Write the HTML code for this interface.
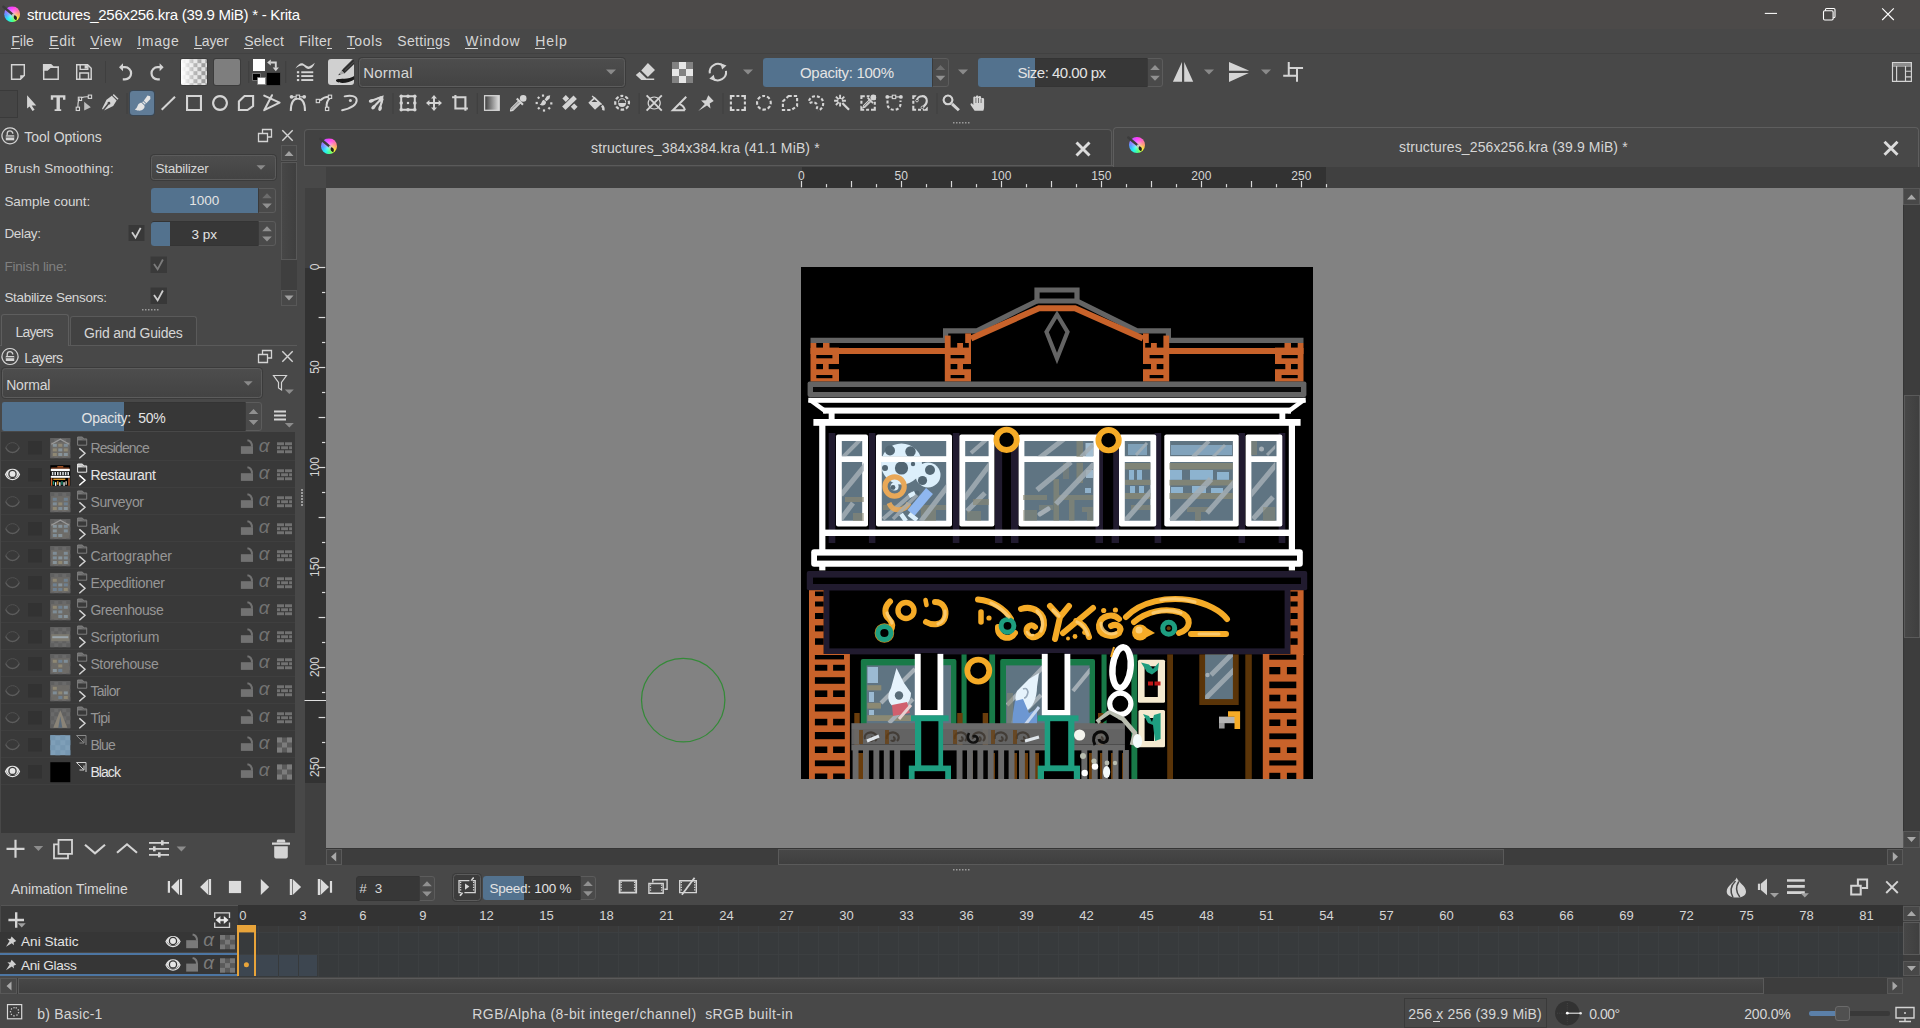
<!DOCTYPE html>
<html><head><meta charset="utf-8"><title>Krita</title>
<style>
html,body{margin:0;padding:0;}
body{width:1920px;height:1028px;overflow:hidden;background:#484848;position:relative;font-family:"Liberation Sans",sans-serif;color:#d6d6d6;}
.a{position:absolute;box-sizing:border-box;display:block;}
.t{position:absolute;white-space:pre;font-family:"Liberation Sans",sans-serif;}
svg{overflow:visible}
.btn{border:1px solid #5c5c5c;border-radius:3.5px;background:linear-gradient(#4d4d4d,#434343);box-shadow:0 0 0 1px #3b3b3b;}
.field{border:1px solid #343434;border-radius:3px;background:#373737;}
</style></head><body>

<div class="a " style="left:0px;top:0px;width:1920px;height:28.6px;background:#4c4a49;"></div>
<span class="t" style="left:27.0px;top:7.0px;font-size:15px;line-height:15px;letter-spacing:-0.268px;color:#ffffff;">structures_256x256.kra (39.9 MiB) * - Krita</span>
<div class="a " style="left:0px;top:53px;width:1920px;height:1px;background:#414141;"></div>
<span class="t" style="left:11.3px;top:34.4px;font-size:14px;line-height:14px;letter-spacing:-0.019px;color:#d6d6d6;">File</span>
<div class="a " style="left:11.3px;top:48px;width:8.6px;height:1px;background:#d6d6d6;"></div>
<span class="t" style="left:49.3px;top:34.4px;font-size:14px;line-height:14px;letter-spacing:0.525px;color:#d6d6d6;">Edit</span>
<div class="a " style="left:49.3px;top:48px;width:9.3px;height:1px;background:#d6d6d6;"></div>
<span class="t" style="left:90.2px;top:34.4px;font-size:14px;line-height:14px;letter-spacing:0.503px;color:#d6d6d6;">View</span>
<div class="a " style="left:90.2px;top:48px;width:9.3px;height:1px;background:#d6d6d6;"></div>
<span class="t" style="left:137.3px;top:34.4px;font-size:14px;line-height:14px;letter-spacing:0.648px;color:#d6d6d6;">Image</span>
<div class="a " style="left:137.3px;top:48px;width:3.9px;height:1px;background:#d6d6d6;"></div>
<span class="t" style="left:194.2px;top:34.4px;font-size:14px;line-height:14px;letter-spacing:-0.129px;color:#d6d6d6;">Layer</span>
<div class="a " style="left:194.2px;top:48px;width:7.8px;height:1px;background:#d6d6d6;"></div>
<span class="t" style="left:244.2px;top:34.4px;font-size:14px;line-height:14px;letter-spacing:0.138px;color:#d6d6d6;">Select</span>
<div class="a " style="left:244.2px;top:48px;width:9.3px;height:1px;background:#d6d6d6;"></div>
<span class="t" style="left:299.0px;top:34.4px;font-size:14px;line-height:14px;letter-spacing:0.318px;color:#d6d6d6;">Filter</span>
<div class="a " style="left:327.0px;top:48px;width:4.7px;height:1px;background:#d6d6d6;"></div>
<span class="t" style="left:346.7px;top:34.4px;font-size:14px;line-height:14px;letter-spacing:0.655px;color:#d6d6d6;">Tools</span>
<div class="a " style="left:346.7px;top:48px;width:8.6px;height:1px;background:#d6d6d6;"></div>
<span class="t" style="left:397.3px;top:34.4px;font-size:14px;line-height:14px;letter-spacing:0.302px;color:#d6d6d6;">Settings</span>
<div class="a " style="left:426.8px;top:48px;width:7.8px;height:1px;background:#d6d6d6;"></div>
<span class="t" style="left:465.3px;top:34.4px;font-size:14px;line-height:14px;letter-spacing:0.922px;color:#d6d6d6;">Window</span>
<div class="a " style="left:465.3px;top:48px;width:13.2px;height:1px;background:#d6d6d6;"></div>
<span class="t" style="left:535.3px;top:34.4px;font-size:14px;line-height:14px;letter-spacing:0.869px;color:#d6d6d6;">Help</span>
<div class="a " style="left:535.3px;top:48px;width:10.1px;height:1px;background:#d6d6d6;"></div>
<div class="a btn" style="left:359px;top:58px;width:266px;height:29px;"></div>
<span class="t" style="left:363.3px;top:64.6px;font-size:15px;line-height:15px;letter-spacing:0.172px;color:#d6d6d6;">Normal</span>
<div class="a field" style="left:763px;top:58px;width:186px;height:29px;"></div>
<div class="a " style="left:763px;top:58px;width:169px;height:29px;background:#53728e;border-radius:3px 0 0 3px;"></div>
<div class="a " style="left:932px;top:58px;width:17px;height:29px;background:#4a4a4a;border:1px solid #5c5c5c;border-left:1px solid #3a3a3a;border-radius:0 3px 3px 0;"></div>
<span class="t" style="left:800.0px;top:64.5px;font-size:15px;line-height:15px;letter-spacing:-0.296px;color:#e4e4e4;">Opacity: 100%</span>
<div class="a field" style="left:978px;top:58px;width:185px;height:29px;"></div>
<div class="a " style="left:978px;top:58px;width:57px;height:29px;background:#53728e;border-radius:3px 0 0 3px;"></div>
<div class="a " style="left:1147px;top:58px;width:16px;height:29px;background:#4a4a4a;border:1px solid #5c5c5c;border-left:1px solid #3a3a3a;border-radius:0 3px 3px 0;"></div>
<span class="t" style="left:1017.5px;top:64.5px;font-size:15px;line-height:15px;letter-spacing:-0.504px;color:#e4e4e4;">Size: 40.00 px</span>
<div class="a " style="left:0px;top:90px;width:18px;height:28px;background:#454545;border:1px solid #3a3a3a;border-left:none;"></div>
<div class="a " style="left:130px;top:91px;width:24.3px;height:24.3px;background:#607c97;border-radius:3px;box-shadow:0 0 0 1px #3a4754;"></div>
<div class="a" style="left:181px;top:58.8px;width:26.2px;height:26.2px;border-radius:2px;overflow:hidden;background:#e2e2e2;box-shadow:0 0 0 1px #3c3c3c;"><div class="a" style="left:0;top:0;width:27px;height:27px;background:conic-gradient(#e0e0e0 25%,#9a9a9a 0 50%,#e0e0e0 0 75%,#9a9a9a 0) 0.4px 0.2px/8px 8px;"></div><div class="a" style="left:0;top:0;width:27px;height:27px;background:linear-gradient(90deg,#fff 0%,rgba(255,255,255,0.78) 18%,rgba(255,255,255,0.32) 48%,rgba(255,255,255,0.05) 80%,rgba(255,255,255,0) 100%);"></div></div>
<div class="a " style="left:214px;top:58.8px;width:26.2px;height:26.2px;background:#7e7e7e;border-radius:2px;box-shadow:0 0 0 1px #3c3c3c;"></div>
<div class="a " style="left:252.5px;top:58.8px;width:12.5px;height:12px;background:#ffffff;"></div>
<div class="a " style="left:266.8px;top:72.9px;width:12.8px;height:12.2px;background:#000000;box-shadow:0 0 0 0.6px #3a3a3a;"></div>
<div class="a " style="left:253.3px;top:73.7px;width:7.2px;height:6.4px;background:#000;box-shadow:0 0 0 0.8px #7a7a7a;"></div>
<div class="a " style="left:257.8px;top:77.8px;width:6.8px;height:6.4px;background:#fff;box-shadow:0 0 0 0.8px #9a9a9a;"></div>
<div class="a " style="left:328px;top:58.8px;width:26.2px;height:26.2px;background:#d0d0d0;border-radius:3px;"></div>
<div class="a" style="left:672px;top:62px;width:21px;height:21px;background:#e6e6e6;"><div class="a" style="left:0px;top:0px;width:7px;height:7px;background:#828282;"></div><div class="a" style="left:14px;top:0px;width:7px;height:7px;background:#828282;"></div><div class="a" style="left:7px;top:7px;width:7px;height:7px;background:#828282;"></div><div class="a" style="left:0px;top:14px;width:7px;height:7px;background:#828282;"></div><div class="a" style="left:14px;top:14px;width:7px;height:7px;background:#828282;"></div></div>
<svg class="a" style="left:0;top:0" width="1920" height="130" viewBox="0 0 1920 130"><path d="M11.6,64.7 H24.3 V75.4 L20.4,79.3 H11.6 Z" fill="none" stroke="#d4d4d4" stroke-width="1.44" /><path d="M20.2,75.2 H24.6 L20.2,79.6 Z" fill="#d4d4d4"/><path d="M42.9,63.9 H51.1 L53.6,66.2 H59 V68 H50.6 L47.6,70.8 H42.9 Z" fill="#d4d4d4"/><path d="M43.7,68 V79.3 H58.2 V67.6" fill="none" stroke="#d4d4d4" stroke-width="1.44" /><path d="M76.7,64.7 H87.6 L91.2,68.3 V79.3 H76.7 Z" fill="none" stroke="#d4d4d4" stroke-width="1.44" /><path d="M80.2,64.7 V69.4 H87.8 V65 M79.8,79.3 V73 H88.5 V79.3" fill="none" stroke="#d4d4d4" stroke-width="1.4" /><rect x="84.6" y="65.2" width="2.6" height="3.4" fill="#d4d4d4"/><path d="M122.4,67.2 H125 A6.1,6.1 0 0 1 125,79.4 H122.8" fill="none" stroke="#d4d4d4" stroke-width="2.2" /><path d="M119,67.2 L123,63.2 V71.2 Z" fill="#d4d4d4"/><path d="M160.2,67.2 H157.6 A6.1,6.1 0 0 0 157.6,79.4 H159.8" fill="none" stroke="#d4d4d4" stroke-width="2.2" /><path d="M163.6,67.2 L159.6,63.2 V71.2 Z" fill="#d4d4d4"/><rect x="105" y="61" width="1" height="22" fill="#3f3f3f"/><rect x="248.2" y="61" width="1" height="22" fill="#3f3f3f"/><rect x="285.2" y="61" width="1" height="22" fill="#3f3f3f"/><g transform="translate(272,65)" ><path d="M-1.4,-2.5 H3.8 V2.7" fill="none" stroke="#d4d4d4" stroke-width="1.9" /><path d="M-4.9,-2.5 L-1.2,-5.4 V0.4 Z M3.8,6.25 L0.7,2.5 H6.9 Z" fill="#d4d4d4"/></g><path d="M295.4,68.6 C298,64.6 300.6,62.6 303,63.6 C305.4,64.8 306.6,66.8 309,66.4 C311,66 312.6,64.4 314.8,62.8 C313.6,66.4 311,69.4 308,69 C305.4,68.4 304.6,66 302.4,65.6 C300.4,65.4 298,66.6 295.4,68.6 Z" fill="#d4d4d4"/><rect x="296.9" y="71.2" width="2.3" height="2.1" fill="#d4d4d4"/><rect x="301.25" y="71.3" width="12" height="1.9" fill="#d4d4d4"/><rect x="296.9" y="75" width="2.3" height="2.1" fill="#d4d4d4"/><rect x="301.25" y="75.1" width="12" height="1.9" fill="#d4d4d4"/><rect x="296.9" y="79" width="2.3" height="2.1" fill="#d4d4d4"/><rect x="301.25" y="79.1" width="12" height="1.9" fill="#d4d4d4"/><clipPath id="pc"><rect x="328" y="58.8" width="26.2" height="26.2" rx="3"/></clipPath><g clip-path="url(#pc)"><path d="M336.6,79.6 C340,78 348,80.4 355,75.6 L355,79 C349,83.6 340,83.4 337.2,82 C335.6,81 335.6,80.2 336.6,79.6 Z" fill="#1a1a1a"/><path d="M341.6,70.4 L354.6,57.6 L357.4,60.8 L344.4,73.6 Z" fill="#2c2c2c"/><path d="M343,69 L355.4,57" stroke="#6a6a6a" stroke-width="0.7"/><path d="M344.6,70.8 L357,58.8" stroke="#6a6a6a" stroke-width="0.7"/><path d="M338.2,75.2 L341.6,70.4 L344.4,73.6 Z" fill="#a4a4a4"/><path d="M338.2,75.2 L339.5,73.4 L340.6,74.6 Z" fill="#333"/></g><path d="M606.0,69.5 h10 l-5.0,5 z" fill="#8a8a8a"/><g transform="translate(647,72)" ><path d="M0.9,-9.1 L8,-2 L0.9,5.1 L-5.75,-1.6 Z M-7.4,-0.3 L-0.5,6.6 H7.2 V8 H-5.75 L-11.2,3 Z" fill="#d4d4d4"/></g><g transform="translate(717.9,72.1)" ><path d="M-8.1,1.2 A8.2,8.2 0 0 1 5,-6.5 M8.1,-1.2 A8.2,8.2 0 0 1 -5,6.5" fill="none" stroke="#d4d4d4" stroke-width="2" /><path d="M2.6,-8.8 L8.6,-6.6 L4.2,-2.6 Z M-2.6,8.8 L-8.6,6.6 L-4.2,2.6 Z" fill="#d4d4d4"/></g><path d="M743.0,69.5 h10 l-5.0,5 z" fill="#8a8a8a"/><path d="M935.7,70.07 h9.6 l-4.8,-5 z" fill="#6c6c6c"/><path d="M935.7,75.74 h9.6 l-4.8,5 z" fill="#909090"/><path d="M958.0,69.5 h10 l-5.0,5 z" fill="#8a8a8a"/><path d="M1150.2,70.07 h9.6 l-4.8,-5 z" fill="#909090"/><path d="M1150.2,75.74 h9.6 l-4.8,5 z" fill="#909090"/><g transform="translate(1183,72)" ><path d="M-1,-10 v19.8 h-9.1 z M1.2,-10 v19.8 h9 z" fill="#d4d4d4"/></g><path d="M1204.0,69.5 h10 l-5.0,5 z" fill="#8a8a8a"/><g transform="translate(1238.9,72)" ><path d="M-9.9,-1.2 v-8.8 l19.8,8.4 v0.4 z M-9.9,0.9 h19.8 l-19.8,9.1 z" fill="#d4d4d4"/></g><path d="M1261.0,69.5 h10 l-5.0,5 z" fill="#8a8a8a"/><g transform="translate(1294,72)" ><path d="M-5.25,-10 v13.8 M-5.25,-3.9 h14.3 M-10.8,3.8 h14.3 M3,-3.9 v13.7" fill="none" stroke="#d4d4d4" stroke-width="2" /></g><g transform="translate(1902,72)" ><path d="M-9.5,-9.5 H9.4 V9.4 H-9.5 Z M-9.5,-8 H9.4 M-9.5,-6 H9.4 M-5.4,-6 V9.4 M3.5,-6 V9.4 M3.5,-0.75 H9.4 M3.5,4.9 H9.4" fill="none" stroke="#d4d4d4" stroke-width="1.15" /></g><path d="M1764.8,13.4 h12.2" fill="none" stroke="#ffffff" stroke-width="1.05" /><rect x="1825.4" y="8.5" width="9.6" height="9.2" rx="1.2" fill="none" stroke="#fff" stroke-width="1.1"/><rect x="1823.5" y="10.8" width="9.6" height="9.2" rx="1.2" fill="#4b4948" stroke="#fff" stroke-width="1.1"/><path d="M1882.2,8.4 l11.6,11.6 M1893.8,8.4 l-11.6,11.6" fill="none" stroke="#ffffff" stroke-width="1.1" /><g transform="translate(12.1,14.2)"><foreignObject x="-8.1" y="-8.1" width="16.2" height="16.2"><div style="width:16.2px;height:16.2px;border-radius:50%;background:radial-gradient(circle at 50% 50%,rgba(255,255,255,0.55) 0%,rgba(255,255,255,0) 55%),conic-gradient(from 0deg,#ff38ff,#ff60d0 40deg,#ffa070 90deg,#f4ff30 135deg,#50ff80 170deg,#20f4f0 215deg,#50a0ff 260deg,#a070ff 300deg,#ff38ff 360deg);"></div></foreignObject><path d="M-8.748,-7.452 L0.405,0.162" stroke="#3c3c3c" stroke-width="2.4299999999999997" stroke-linecap="round"/><path d="M0.162,0.0 L2.4299999999999997,1.944" stroke="#c4c4c4" stroke-width="2.592"/><path d="M2.2680000000000002,1.1340000000000001 c2.592,0.486 3.4019999999999997,2.916 1.944,4.859999999999999 c-1.782,-0.324 -3.564,-2.2680000000000002 -1.944,-4.859999999999999 z" fill="#202020"/></g><rect x="126.5" y="93" width="1" height="21" fill="#3f3f3f"/><rect x="392.5" y="93" width="1" height="21" fill="#3f3f3f"/><rect x="476.8" y="93" width="1" height="21" fill="#3f3f3f"/><rect x="638.6" y="93" width="1" height="21" fill="#3f3f3f"/><rect x="722.5" y="93" width="1" height="21" fill="#3f3f3f"/><rect x="936.5" y="93" width="1" height="21" fill="#3f3f3f"/><g transform="translate(31,103)" ><path d="M-3.9,-7.8 V5.5 L-1.4,3.4 L1.5,8 L3.6,6.75 L0.7,2.6 H5.25 Z" fill="#d4d4d4"/></g><g transform="translate(58,103)" ><path d="M-7.2,-7.8 H7.4 V-3.25 H5 V-5.6 H1.9 V6.3 H3.2 V8 H-3.4 V6.3 H-1.5 V-5.6 H-4.8 V-3.25 H-7.2 Z" fill="#d4d4d4"/></g><g transform="translate(83.5,103)" ><path d="M-5.6,4 C-5.6,-1 -5,-4 -3.5,-4.1 M-1.8,-5.4 C0.5,-6.3 2.5,-6.3 4.6,-6.2" fill="none" stroke="#d4d4d4" stroke-width="1.2" /><rect x="-5.2" y="-5.8" width="3.3" height="3.3" fill="none" stroke="#d4d4d4" stroke-width="1.1"/><rect x="4.8" y="-7.9" width="3.3" height="3.3" fill="none" stroke="#d4d4d4" stroke-width="1.1"/><rect x="-7.3" y="4.2" width="3.3" height="3.3" fill="none" stroke="#d4d4d4" stroke-width="1.1"/><path d="M0.7,-1.2 V7.6 L7.3,4.25 Z" fill="#bdbdbd"/></g><g transform="translate(110,103)" ><path d="M-8,5.8 L-3.5,-3.2 L1.8,-7.2 L6.6,-2.6 L3.2,3 L-6,7.6 L-1.2,1.6 a1.4,1.4 0 1 0 -1.2,-1 L-7.2,6.6 Z" fill="#d4d4d4"/><path d="M3.2,-8.4 L8,-3.8" stroke="#d4d4d4" stroke-width="1.5"/></g><g transform="translate(142,103)" ><path d="M5.5,-7.6 L8.2,-6.8 L8.4,-4 L4.4,0.2 L1.8,-2.3 Z" fill="#e4e4e4"/><path d="M1.2,-1.7 L3.8,0.8 L2.9,1.8 L0.2,-0.8 Z" fill="#e4e4e4"/><path d="M-0.4,-0.2 L2.4,2.5 C3.4,5.5 0,8 -3.5,7.6 C-5.2,7.4 -6.6,6.8 -7.2,6.2 C-4.8,5.6 -5,3.6 -3.8,1.6 C-3,0.4 -1.6,-0.2 -0.4,-0.2 Z" fill="#e4e4e4"/></g><g transform="translate(168.3,103)" ><path d="M-6.6,6.7 L6.7,-6.2" fill="none" stroke="#d4d4d4" stroke-width="2" /></g><g transform="translate(194,103)" ><path d="M-6.95,-6.95 h13.9 v13.9 h-13.9 z" fill="none" stroke="#d4d4d4" stroke-width="2.1" /></g><g transform="translate(220,103)" ><path d="M0,-6.85 a6.85,6.85 0 1 0 0.01,0 z" fill="none" stroke="#d4d4d4" stroke-width="2.1" /></g><g transform="translate(246,103)" ><path d="M-1.5,-7 H7.1 V3 L1.5,7 H-7.1 V-1.5 Z" fill="none" stroke="#d4d4d4" stroke-width="2.1" /></g><g transform="translate(271.7,103)" ><path d="M-7.5,-7.4 L7.9,-0.3 L-7.5,7.2 L0.3,-7.8" fill="none" stroke="#d4d4d4" stroke-width="2" stroke-linejoin="round" stroke-linecap="round"/></g><g transform="translate(297.9,103)" ><path d="M-7.1,8 C-7.1,-2 -3.5,-4.6 0,-4.6 C3.5,-4.6 7.1,-2 7.1,8" fill="none" stroke="#d4d4d4" stroke-width="2" /><path d="M-6.2,-6.2 H6.3" fill="none" stroke="#d4d4d4" stroke-width="1.2" /><circle cx="-6.3" cy="-6.2" r="1.9" fill="#d4d4d4"/><circle cx="6.3" cy="-6.2" r="1.9" fill="#d4d4d4"/><rect x="-1.7" y="-7.9" width="3.4" height="3.4" fill="#484848" stroke="#d4d4d4" stroke-width="1.1"/></g><g transform="translate(324.5,103)" ><path d="M-4.5,-2.6 C-1.2,-5.5 2.2,-6.3 4.2,-6.3" fill="none" stroke="#d4d4d4" stroke-width="2" /><path d="M5.5,-5 C2.2,-2.2 1.8,1.2 2.3,4.5" fill="none" stroke="#d4d4d4" stroke-width="2" /><rect x="-8.25" y="-3.65" width="3.3" height="3.3" fill="#484848" stroke="#d4d4d4" stroke-width="1.1"/><rect x="3.85" y="-7.85" width="3.3" height="3.3" fill="#484848" stroke="#d4d4d4" stroke-width="1.1"/><rect x="0.9500000000000002" y="4.25" width="3.3" height="3.3" fill="#484848" stroke="#d4d4d4" stroke-width="1.1"/></g><g transform="translate(350,103)" ><path d="M-5.4,-6.6 C1,-8 6.5,-7 6.7,-3 C6.8,2 0,5.5 -7.9,7.2" fill="none" stroke="#d4d4d4" stroke-width="1.9" stroke-linecap="round"/><circle cx="0.4" cy="-2.4" r="1.5" fill="#d4d4d4"/></g><g transform="translate(376.7,103)" ><path d="M7,-7.8 L0.5,-5.2 L5.6,0.5 Z" fill="#d4d4d4"/><path d="M5,-6 L-4.5,-2.5 M5.5,-5 L-2.6,3.4 M6,-4.5 L3.5,4" fill="none" stroke="#d4d4d4" stroke-width="2.16" /><ellipse cx="-5.4" cy="-2.1" rx="2.6" ry="1.7" fill="#d4d4d4" transform="rotate(-20 -5.4 -2.1)"/><ellipse cx="-3.2" cy="4.2" rx="2.6" ry="1.7" fill="#d4d4d4" transform="rotate(-45 -3.2 4.2)"/><ellipse cx="3.4" cy="5.4" rx="1.8" ry="2.6" fill="#d4d4d4" transform="rotate(15 3.4 5.4)"/></g><g transform="translate(408,103)" ><path d="M-6.8,-6.8 h13.6 v13.6 h-13.6 z" fill="none" stroke="#d4d4d4" stroke-width="2" /><circle cx="-6.8" cy="-6.8" r="1.75" fill="#d4d4d4"/><circle cx="-6.8" cy="0" r="1.75" fill="#d4d4d4"/><circle cx="-6.8" cy="6.8" r="1.75" fill="#d4d4d4"/><circle cx="0" cy="-6.8" r="1.75" fill="#d4d4d4"/><circle cx="0" cy="6.8" r="1.75" fill="#d4d4d4"/><circle cx="6.8" cy="-6.8" r="1.75" fill="#d4d4d4"/><circle cx="6.8" cy="0" r="1.75" fill="#d4d4d4"/><circle cx="6.8" cy="6.8" r="1.75" fill="#d4d4d4"/><rect x="-1.1" y="-1.1" width="2.2" height="2.2" fill="#d4d4d4"/></g><g transform="translate(434,103)" ><path d="M-6,0 h12 M0,-6 v12" fill="none" stroke="#d4d4d4" stroke-width="2" /><path d="M-8,0 l3.4,-3 v6 z M8,0 l-3.4,-3 v6 z M0,-8 l-3,3.4 h6 z M0,8 l-3,-3.4 h6 z" fill="#d4d4d4"/></g><g transform="translate(460,103)" ><path d="M-4.6,-8 V5.5 H7.9 M-7.9,-5.75 H5.4 V7.8" fill="none" stroke="#d4d4d4" stroke-width="2.1" /></g><defs><linearGradient id="tg" x1="0" x2="1"><stop offset="0" stop-color="#3a3a3a"/><stop offset="1" stop-color="#e0e0e0"/></linearGradient></defs><g transform="translate(491.9,103)" ><rect x="-7.3" y="-7.3" width="14.6" height="14.6" fill="url(#tg)" stroke="#d4d4d4" stroke-width="1.3"/></g><g transform="translate(518.3,103)" ><circle cx="4.9" cy="-4.6" r="3.3" fill="#d4d4d4"/><path d="M-0.8,-5.2 L5.4,1 L3.9,2.5 L-2.3,-3.7 Z" fill="#d4d4d4"/><path d="M0.6,-2.4 L-7.2,5.4 L-7.8,7.9 L-5.3,7.3 L2.5,-0.5" fill="none" stroke="#d4d4d4" stroke-width="1.2" stroke-linejoin="round"/><path d="M1,-0.6 L-6.6,7" fill="none" stroke="#d4d4d4" stroke-width="1.1" /></g><g transform="translate(544,103)" ><path d="M6.2,-7.8 L3,-7 L0.6,-3.4 L2.4,-1.8 L5.6,-4.6 Z" fill="#d4d4d4"/><path d="M0,-3 L2,-1.2 C2.4,1.4 0.2,2.6 -2,2.4 C-3.2,2.3 -4,1.9 -4.4,1.5 C-2.6,1.1 -2.8,-0.4 -2,-1.6 C-1.4,-2.5 -0.8,-3 0,-3 Z" fill="#d4d4d4"/><rect x="-8.4" y="-1.1" width="2.2" height="2.2" fill="#d4d4d4" transform="rotate(0 -7.3 0)"/><rect x="-6.5" y="-6.300000000000001" width="2.2" height="2.2" fill="#d4d4d4" transform="rotate(45 -5.4 -5.2)"/><rect x="-2.1" y="-8.5" width="2.2" height="2.2" fill="#d4d4d4" transform="rotate(0 -1 -7.4)"/><rect x="6.199999999999999" y="-0.7000000000000001" width="2.2" height="2.2" fill="#d4d4d4" transform="rotate(0 7.3 0.4)"/><rect x="4.1" y="4.1" width="2.2" height="2.2" fill="#d4d4d4" transform="rotate(45 5.2 5.2)"/><rect x="-1.1" y="6.4" width="2.2" height="2.2" fill="#d4d4d4" transform="rotate(0 0 7.5)"/><rect x="-6.300000000000001" y="4.1" width="2.2" height="2.2" fill="#d4d4d4" transform="rotate(45 -5.2 5.2)"/></g><g transform="translate(570,103)" ><path d="M-6.2,5.2 L5.2,-5.8" stroke="#d4d4d4" stroke-width="4.8"/><path d="M-4.2,-7.9 l3.4,3.4 l-3.4,3.4 l-3.4,-3.4 z M4.2,0.4 l3.4,3.4 l-3.4,3.4 l-3.4,-3.4 z" fill="#d4d4d4"/></g><g transform="translate(595.7,103)" ><path d="M-7.4,-0.3 L-1.1,-6.2 L5.55,0.9 L-0.7,6.75 Z" fill="#d4d4d4"/><path d="M-4.2,-0.9 L-1.2,-3.8 L1.8,-0.9 Z" fill="#484848"/><path d="M-3.6,-7 L6,1.6" fill="none" stroke="#d4d4d4" stroke-width="1.3" /><path d="M6.2,2.6 C7.8,4.2 8,5.8 7.6,7.4" fill="none" stroke="#d4d4d4" stroke-width="2.4" /></g><g transform="translate(622.1,102.8)" ><path d="M0,-6.9 a6.9,6.9 0 1 0 0.01,0 z" fill="none" stroke="#d4d4d4" stroke-width="2.2" stroke-dasharray="3.4 2.02" stroke-dashoffset="1.7"/><path d="M-3.9,0.2 a3.9,3.9 0 0 0 7.8,0 z" fill="#d4d4d4"/><path d="M-3.6,-0.4 a3.6,3.6 0 0 1 7.2,0" fill="none" stroke="#d4d4d4" stroke-width="1.1"/></g><g transform="translate(654.2,103)" ><path d="M-7.6,-7.6 L7.6,7.6 M7.6,-7.6 L-7.6,7.6" fill="none" stroke="#d4d4d4" stroke-width="1.9" /><path d="M0,-6 a6,6 0 1 0 0.01,0 z" fill="none" stroke="#d4d4d4" stroke-width="1.2" /></g><g transform="translate(679.5,103)" ><path d="M5.4,7.2 H-6.6 L6.75,-6.2" fill="none" stroke="#d4d4d4" stroke-width="2" stroke-linejoin="miter"/><path d="M-0.3,0.9 Q4.6,2.8 5.4,7.2" fill="none" stroke="#d4d4d4" stroke-width="2" /></g><g transform="translate(705.7,103)" ><path d="M2.6,-7.8 L8,-2 L4,0.4 L4.8,5.6 L1.3,2.4 L-7.4,7.9 L-0.9,1 L-4.6,-2.6 L0.4,-2.8 Z" fill="#d4d4d4"/></g><g transform="translate(737.9,103)" ><path d="M-7,-7 h14 v14 h-14 z" fill="none" stroke="#d4d4d4" stroke-width="2.1" stroke-dasharray="7.2 1.9 3 1.9" stroke-dashoffset="3.6"/></g><g transform="translate(763.9,102.8)" ><path d="M0,-6.85 a6.85,6.85 0 1 0 0.01,0 z" fill="none" stroke="#d4d4d4" stroke-width="2.1" stroke-dasharray="3.4 1.98" stroke-dashoffset="1.7"/></g><g transform="translate(790,103)" ><path d="M-1.5,-7 H7.1 V3 L1.5,7 H-7.1 V-1.5 Z" fill="none" stroke="#d4d4d4" stroke-width="2.1" stroke-dasharray="3.3 2"/></g><g transform="translate(816,103)" ><path d="M-7,-2.2 C-5.5,-8 3.5,-8.2 6.4,-3 C8.6,1.6 6,6.6 2,7.6 M-6.4,0 C-3,-1.6 0.6,-0.6 1.2,2.4 C1.5,4.4 0.8,5.4 0.2,6" fill="none" stroke="#d4d4d4" stroke-width="2.1" stroke-dasharray="3 1.9"/></g><g transform="translate(841.7,103)" ><path d="M0.6,0 L7.3,6.75" fill="none" stroke="#d4d4d4" stroke-width="2.3" /><path d="M-1.6,-8.2 V-4 M-1.6,-0.4 V3.4 M-7.6,-2.2 H-3.4 M0.2,-2.2 H4.2 M-5.8,-6.4 L-3,-3.6 M2.6,-6.4 L-0.2,-3.6 M-5.8,2 L-3,-0.8" fill="none" stroke="#d4d4d4" stroke-width="1.9" /></g><g transform="translate(868.1,103)" ><path d="M-6.7,-6.7 h13.4 v13.4 h-13.4 z" fill="none" stroke="#d4d4d4" stroke-width="2.1" stroke-dasharray="6.8 1.9 3 1.9" stroke-dashoffset="3.4"/><path d="M6.6,-7.4 L-5,4.8" stroke="#484848" stroke-width="6"/><circle cx="5.2" cy="-5.6" r="2.9" fill="#d4d4d4"/><path d="M0.2,-6 L5.6,-0.6 L4.3,0.7 L-1.1,-4.7 Z" fill="#d4d4d4"/><path d="M1.2,-3.2 L-4.6,2.6 L-5.2,4.8 L-3,4.2 L2.8,-1.6" fill="none" stroke="#d4d4d4" stroke-width="1.1" stroke-linejoin="round"/><path d="M1.6,-1.8 L-4.2,4" fill="none" stroke="#d4d4d4" stroke-width="1" /></g><g transform="translate(894,103)" ><path d="M-6.5,-2.6 V1 C-6.5,4.6 -3.5,6.8 0,6.8 C3.5,6.8 6.5,4.6 6.5,1 V-2.6" fill="none" stroke="#d4d4d4" stroke-width="2.1" stroke-dasharray="3 2"/><path d="M-6.6,-6.1 H6.8" fill="none" stroke="#d4d4d4" stroke-width="1.2" /><circle cx="-6.7" cy="-6.1" r="1.9" fill="#d4d4d4"/><circle cx="6.9" cy="-6.1" r="1.9" fill="#d4d4d4"/><rect x="-1.7" y="-7.8" width="3.4" height="3.4" fill="#484848" stroke="#d4d4d4" stroke-width="1.1"/></g><g transform="translate(920,103)" ><path d="M-6.7,-6.7 h13.4 v13.4 h-13.4 z" fill="none" stroke="#d4d4d4" stroke-width="2.1" stroke-dasharray="6.8 1.9 3 1.9" stroke-dashoffset="3.4"/><path d="M-3,-2.6 C-2.5,-8 6.6,-8.6 6.8,-2.2 C7,1.5 4,3 2.4,4.6" fill="none" stroke="#484848" stroke-width="5.6"/><rect x="2" y="-9" width="7" height="9" fill="#484848"/><path d="M-3,-2.6 C-2.5,-8 6.6,-8.6 6.8,-2.2 C7,1.5 4,3 2.4,4.6" fill="none" stroke="#d4d4d4" stroke-width="2.1" /><circle cx="-3" cy="-2.4" r="1.3" fill="#484848" stroke="#d4d4d4" stroke-width="0.9"/><circle cx="2.4" cy="4.4" r="1.3" fill="#484848" stroke="#d4d4d4" stroke-width="0.9"/></g><g transform="translate(951.7,103)" ><path d="M-3.7,-7.5 a4.4,4.4 0 1 0 0.01,0 z" fill="none" stroke="#d4d4d4" stroke-width="2.1" /><path d="M0.3,0.8 L7.2,7.25" fill="none" stroke="#d4d4d4" stroke-width="3" /></g><g transform="translate(977.2,103)" ><path d="M-2.6,7.75 L-6.4,2.2 C-7.4,0.7 -5.6,-0.5 -4.6,0.9 L-3.9,1.9 V-5.4 C-3.9,-7 -1.3,-7 -1.3,-5.4 V-6.2 C-1.3,-7.8 1.3,-7.8 1.3,-6.2 V-5.8 C1.3,-7.4 3.9,-7.4 3.9,-5.8 V-3.8 C3.9,-5.4 6.9,-5.4 6.9,-3.8 V4 C6.9,6 6.4,7 6,7.75 Z" fill="#d4d4d4"/><path d="M-1.3,-5 V0 M1.3,-5 V0 M3.9,-4 V0" stroke="#484848" stroke-width="0.7"/></g><rect x="953" y="122" width="1.5" height="1.5" fill="#9a9a9a"/><rect x="956" y="122" width="1.5" height="1.5" fill="#9a9a9a"/><rect x="959" y="122" width="1.5" height="1.5" fill="#9a9a9a"/><rect x="962" y="122" width="1.5" height="1.5" fill="#9a9a9a"/><rect x="965" y="122" width="1.5" height="1.5" fill="#9a9a9a"/><rect x="968" y="122" width="1.5" height="1.5" fill="#9a9a9a"/></svg>
<span class="t" style="left:24.3px;top:129.9px;font-size:14px;line-height:14px;letter-spacing:-0.029px;color:#d6d6d6;">Tool Options</span>
<div class="a " style="left:281px;top:145px;width:16px;height:161px;background:#3f3f3f;"></div>
<div class="a " style="left:281px;top:145px;width:16px;height:16px;background:#484848;border:1px solid #585858;"></div>
<div class="a " style="left:281px;top:162px;width:16px;height:98px;background:linear-gradient(90deg,#474747,#3f3f3f);border:1px solid #585858;"></div>
<div class="a " style="left:281px;top:290px;width:16px;height:16px;background:#484848;border:1px solid #585858;"></div>
<span class="t" style="left:4.4px;top:162.2px;font-size:13.5px;line-height:13.5px;letter-spacing:0.133px;color:#d6d6d6;">Brush Smoothing:</span>
<div class="a btn" style="left:151px;top:155px;width:125px;height:25px;"></div>
<span class="t" style="left:155.4px;top:161.7px;font-size:13.5px;line-height:13.5px;letter-spacing:-0.247px;color:#d6d6d6;">Stabilizer</span>
<span class="t" style="left:4.4px;top:194.9px;font-size:13.5px;line-height:13.5px;letter-spacing:-0.033px;color:#d6d6d6;">Sample count:</span>
<div class="a field" style="left:151px;top:188px;width:125px;height:25px;"></div>
<div class="a " style="left:151px;top:188px;width:107px;height:25px;background:#53728e;border-radius:3px 0 0 3px;"></div>
<div class="a " style="left:258px;top:188px;width:18px;height:25px;background:#4a4a4a;border:1px solid #5c5c5c;border-left:1px solid #3a3a3a;border-radius:0 3px 3px 0;"></div>
<span class="t" style="left:189.3px;top:194.4px;font-size:13.5px;line-height:13.5px;letter-spacing:0.000px;color:#e4e4e4;">1000</span>
<span class="t" style="left:4.4px;top:227.0px;font-size:13.5px;line-height:13.5px;letter-spacing:-0.333px;color:#d6d6d6;">Delay:</span>
<div class="a field" style="left:151px;top:221px;width:125px;height:25px;"></div>
<div class="a " style="left:151px;top:221.5px;width:19px;height:24px;background:#53728e;border-radius:3px 0 0 3px;"></div>
<div class="a " style="left:258px;top:221px;width:18px;height:25px;background:#4a4a4a;border:1px solid #5c5c5c;border-left:1px solid #3a3a3a;border-radius:0 3px 3px 0;"></div>
<span class="t" style="left:191.5px;top:228.1px;font-size:13.5px;line-height:13.5px;letter-spacing:-0.000px;color:#e4e4e4;">3 px</span>
<span class="t" style="left:4.4px;top:259.8px;font-size:13.5px;line-height:13.5px;letter-spacing:-0.175px;color:#808080;">Finish line:</span>
<span class="t" style="left:4.4px;top:290.8px;font-size:13.5px;line-height:13.5px;letter-spacing:-0.321px;color:#d6d6d6;">Stabilize Sensors:</span>
<div class="a " style="left:0px;top:345px;width:297px;height:1px;background:#5a5a5a;"></div>
<div class="a " style="left:1px;top:314px;width:68px;height:32px;background:#484848;border:1px solid #5e5e5e;border-bottom:none;border-radius:3px 3px 0 0;"></div>
<div class="a " style="left:70px;top:316px;width:127px;height:29px;background:#424242;border:1px solid #5a5a5a;border-bottom:none;border-radius:3px 3px 0 0;"></div>
<span class="t" style="left:15.6px;top:325.1px;font-size:14px;line-height:14px;letter-spacing:-0.803px;color:#d6d6d6;">Layers</span>
<span class="t" style="left:84.0px;top:325.7px;font-size:14px;line-height:14px;letter-spacing:-0.224px;color:#d6d6d6;">Grid and Guides</span>
<span class="t" style="left:24.3px;top:350.5px;font-size:14px;line-height:14px;letter-spacing:-0.663px;color:#d6d6d6;">Layers</span>
<div class="a btn" style="left:2px;top:368px;width:260px;height:30px;"></div>
<span class="t" style="left:6.2px;top:377.5px;font-size:14px;line-height:14px;letter-spacing:-0.183px;color:#d6d6d6;">Normal</span>
<div class="a field" style="left:2px;top:402px;width:260px;height:29px;"></div>
<div class="a " style="left:2px;top:402px;width:122px;height:29px;background:#53728e;border-radius:2px 0 0 2px;"></div>
<div class="a " style="left:245px;top:402px;width:17px;height:29px;background:#4a4a4a;border:1px solid #5c5c5c;border-left:1px solid #3a3a3a;border-radius:0 3px 3px 0;"></div>
<span class="t" style="left:81.6px;top:410.8px;font-size:14px;line-height:14px;letter-spacing:-0.254px;color:#e4e4e4;">Opacity:  50%</span>
<div class="a " style="left:1px;top:432px;width:294.3px;height:401px;background:#393939;"></div>
<div class="a " style="left:1px;top:460.4px;width:294px;height:1px;background:#3f3f3f;"></div>
<span class="t" style="left:90.4px;top:441.1px;font-size:14px;line-height:14px;letter-spacing:-0.856px;color:#969696;">Residence</span>
<span class="t" style="left:258.8px;top:436.5px;font-size:18.8px;line-height:18.8px;letter-spacing:0.000px;color:#727272;font-style:italic;font-family:"Liberation Serif",serif;transform:scaleX(1.22);transform-origin:0 0;">α</span>
<div class="a " style="left:1px;top:487.4px;width:294px;height:1px;background:#3f3f3f;"></div>
<span class="t" style="left:90.4px;top:468.1px;font-size:14px;line-height:14px;letter-spacing:-0.342px;color:#e6e6e6;">Restaurant</span>
<span class="t" style="left:258.8px;top:463.5px;font-size:18.8px;line-height:18.8px;letter-spacing:0.000px;color:#727272;font-style:italic;font-family:"Liberation Serif",serif;transform:scaleX(1.22);transform-origin:0 0;">α</span>
<div class="a " style="left:1px;top:514.4px;width:294px;height:1px;background:#3f3f3f;"></div>
<span class="t" style="left:90.4px;top:495.1px;font-size:14px;line-height:14px;letter-spacing:-0.345px;color:#969696;">Surveyor</span>
<span class="t" style="left:258.8px;top:490.5px;font-size:18.8px;line-height:18.8px;letter-spacing:0.000px;color:#727272;font-style:italic;font-family:"Liberation Serif",serif;transform:scaleX(1.22);transform-origin:0 0;">α</span>
<div class="a " style="left:1px;top:541.4px;width:294px;height:1px;background:#3f3f3f;"></div>
<span class="t" style="left:90.4px;top:522.1px;font-size:14px;line-height:14px;letter-spacing:-0.836px;color:#969696;">Bank</span>
<span class="t" style="left:258.8px;top:517.5px;font-size:18.8px;line-height:18.8px;letter-spacing:0.000px;color:#727272;font-style:italic;font-family:"Liberation Serif",serif;transform:scaleX(1.22);transform-origin:0 0;">α</span>
<div class="a " style="left:1px;top:568.4px;width:294px;height:1px;background:#3f3f3f;"></div>
<span class="t" style="left:90.4px;top:549.1px;font-size:14px;line-height:14px;letter-spacing:-0.080px;color:#969696;">Cartographer</span>
<span class="t" style="left:258.8px;top:544.5px;font-size:18.8px;line-height:18.8px;letter-spacing:0.000px;color:#727272;font-style:italic;font-family:"Liberation Serif",serif;transform:scaleX(1.22);transform-origin:0 0;">α</span>
<div class="a " style="left:1px;top:595.4px;width:294px;height:1px;background:#3f3f3f;"></div>
<span class="t" style="left:90.4px;top:576.1px;font-size:14px;line-height:14px;letter-spacing:-0.311px;color:#969696;">Expeditioner</span>
<span class="t" style="left:258.8px;top:571.5px;font-size:18.8px;line-height:18.8px;letter-spacing:0.000px;color:#727272;font-style:italic;font-family:"Liberation Serif",serif;transform:scaleX(1.22);transform-origin:0 0;">α</span>
<div class="a " style="left:1px;top:622.4px;width:294px;height:1px;background:#3f3f3f;"></div>
<span class="t" style="left:90.4px;top:603.1px;font-size:14px;line-height:14px;letter-spacing:-0.416px;color:#969696;">Greenhouse</span>
<span class="t" style="left:258.8px;top:598.5px;font-size:18.8px;line-height:18.8px;letter-spacing:0.000px;color:#727272;font-style:italic;font-family:"Liberation Serif",serif;transform:scaleX(1.22);transform-origin:0 0;">α</span>
<div class="a " style="left:1px;top:649.4px;width:294px;height:1px;background:#3f3f3f;"></div>
<span class="t" style="left:90.4px;top:630.1px;font-size:14px;line-height:14px;letter-spacing:-0.179px;color:#969696;">Scriptorium</span>
<span class="t" style="left:258.8px;top:625.5px;font-size:18.8px;line-height:18.8px;letter-spacing:0.000px;color:#727272;font-style:italic;font-family:"Liberation Serif",serif;transform:scaleX(1.22);transform-origin:0 0;">α</span>
<div class="a " style="left:1px;top:676.4px;width:294px;height:1px;background:#3f3f3f;"></div>
<span class="t" style="left:90.4px;top:657.1px;font-size:14px;line-height:14px;letter-spacing:-0.367px;color:#969696;">Storehouse</span>
<span class="t" style="left:258.8px;top:652.5px;font-size:18.8px;line-height:18.8px;letter-spacing:0.000px;color:#727272;font-style:italic;font-family:"Liberation Serif",serif;transform:scaleX(1.22);transform-origin:0 0;">α</span>
<div class="a " style="left:1px;top:703.4px;width:294px;height:1px;background:#3f3f3f;"></div>
<span class="t" style="left:90.4px;top:684.1px;font-size:14px;line-height:14px;letter-spacing:-0.671px;color:#969696;">Tailor</span>
<span class="t" style="left:258.8px;top:679.5px;font-size:18.8px;line-height:18.8px;letter-spacing:0.000px;color:#727272;font-style:italic;font-family:"Liberation Serif",serif;transform:scaleX(1.22);transform-origin:0 0;">α</span>
<div class="a " style="left:1px;top:730.4px;width:294px;height:1px;background:#3f3f3f;"></div>
<span class="t" style="left:90.4px;top:711.1px;font-size:14px;line-height:14px;letter-spacing:-0.680px;color:#969696;">Tipi</span>
<span class="t" style="left:258.8px;top:706.5px;font-size:18.8px;line-height:18.8px;letter-spacing:0.000px;color:#727272;font-style:italic;font-family:"Liberation Serif",serif;transform:scaleX(1.22);transform-origin:0 0;">α</span>
<div class="a " style="left:1px;top:757.4px;width:294px;height:1px;background:#3f3f3f;"></div>
<span class="t" style="left:90.4px;top:738.1px;font-size:14px;line-height:14px;letter-spacing:-0.873px;color:#969696;">Blue</span>
<span class="t" style="left:258.8px;top:733.5px;font-size:18.8px;line-height:18.8px;letter-spacing:0.000px;color:#727272;font-style:italic;font-family:"Liberation Serif",serif;transform:scaleX(1.22);transform-origin:0 0;">α</span>
<div class="a " style="left:1px;top:784.4px;width:294px;height:1px;background:#3f3f3f;"></div>
<span class="t" style="left:90.4px;top:765.1px;font-size:14px;line-height:14px;letter-spacing:-0.934px;color:#e6e6e6;">Black</span>
<span class="t" style="left:258.8px;top:760.5px;font-size:18.8px;line-height:18.8px;letter-spacing:0.000px;color:#727272;font-style:italic;font-family:"Liberation Serif",serif;transform:scaleX(1.22);transform-origin:0 0;">α</span>
<svg class="a" style="left:0;top:0" width="330" height="870" viewBox="0 0 330 870"><g transform="translate(10,135.8)" ><path d="M0,-8 a8,8 0 1 0 0.01,0 z" fill="none" stroke="#d4d4d4" stroke-width="1.2" /><rect x="-4.2" y="-0.5" width="8.4" height="5" fill="#d4d4d4"/><rect x="-4.2" y="0.8" width="8.4" height="0.9" fill="#484848"/><path d="M-2.8,-0.5 v-1.6 a2.8,2.8 0 0 1 5.6,0" fill="none" stroke="#d4d4d4" stroke-width="1.3" /></g><path d="M262.5,133.5 v-4 h9 v7.5 h-4 M258.5,133.5 h9 v8 h-9 z" fill="none" stroke="#d4d4d4" stroke-width="1.3" /><path d="M282.3,130.3 l10.4,10.4 M292.7,130.3 l-10.4,10.4" fill="none" stroke="#d4d4d4" stroke-width="1.4" /><path d="M284.5,156 h9 l-4.5,-5 z M284.5,295.5 h9 l-4.5,5 z" fill="#a0a0a0"/><path d="M256.5,165.25 h9 l-4.5,4.5 z" fill="#8a8a8a"/><path d="M262.2,198.25 h9.6 l-4.8,-5 z" fill="#6c6c6c"/><path d="M262.2,203.5 h9.6 l-4.8,5 z" fill="#909090"/><rect x="128.5" y="225" width="16" height="16" fill="#383838"/><path d="M132.0,232.2 l3.52,5.28 l5.12,-9.6" fill="none" stroke="#cdcdcd" stroke-width="1.8" /><path d="M262.2,231.25 h9.6 l-4.8,-5 z" fill="#909090"/><path d="M262.2,236.5 h9.6 l-4.8,5 z" fill="#909090"/><rect x="150.5" y="256.5" width="16.5" height="16.5" fill="#3a3a3a"/><path d="M154.0,263.925 l3.63,5.445 l5.28,-9.9" fill="none" stroke="#7c7c7c" stroke-width="1.8" /><rect x="150.5" y="287.5" width="16.5" height="16.5" fill="#383838"/><path d="M154.0,294.925 l3.63,5.445 l5.28,-9.9" fill="none" stroke="#cdcdcd" stroke-width="1.8" /><rect x="142" y="309" width="1.5" height="1.5" fill="#9a9a9a"/><rect x="145" y="309" width="1.5" height="1.5" fill="#9a9a9a"/><rect x="148" y="309" width="1.5" height="1.5" fill="#9a9a9a"/><rect x="151" y="309" width="1.5" height="1.5" fill="#9a9a9a"/><rect x="154" y="309" width="1.5" height="1.5" fill="#9a9a9a"/><rect x="157" y="309" width="1.5" height="1.5" fill="#9a9a9a"/><g transform="translate(10,356.5)" ><path d="M0,-8 a8,8 0 1 0 0.01,0 z" fill="none" stroke="#d4d4d4" stroke-width="1.2" /><rect x="-4.2" y="-0.5" width="8.4" height="5" fill="#d4d4d4"/><rect x="-4.2" y="0.8" width="8.4" height="0.9" fill="#484848"/><path d="M-2.8,-0.5 v-1.6 a2.8,2.8 0 0 1 5.6,0" fill="none" stroke="#d4d4d4" stroke-width="1.3" /></g><path d="M262.5,354.5 v-4 h9 v7.5 h-4 M258.5,354.5 h9 v8 h-9 z" fill="none" stroke="#d4d4d4" stroke-width="1.3" /><path d="M282.3,351.3 l10.4,10.4 M292.7,351.3 l-10.4,10.4" fill="none" stroke="#d4d4d4" stroke-width="1.4" /><path d="M243.7,381.25 h9 l-4.5,4.5 z" fill="#8a8a8a"/><path d="M273.5,375.5 h13 l-5,7 v7.5 l-3,-2 v-5.5 z" fill="none" stroke="#d4d4d4" stroke-width="1.2" /><path d="M284.8,389.5 h9 l-4.5,4.6 z" fill="#8c8c8c"/><path d="M248.7,413.89 h9.6 l-4.8,-5 z" fill="#909090"/><path d="M248.7,419.98 h9.6 l-4.8,5 z" fill="#909090"/><path d="M274,411.5 h12 M274,415.5 h12 M274,419.5 h12" fill="none" stroke="#d4d4d4" stroke-width="1.8" /><path d="M284.8,423.0 h9 l-4.5,4.6 z" fill="#8c8c8c"/><path d="M5.7,447.5 c3,-6.5 10.6,-6.5 13.6,0" fill="none" stroke="#505050" stroke-width="1"/><path d="M5.7,447.5 c3,6.5 10.6,6.5 13.6,0" fill="none" stroke="#5c5c5c" stroke-width="1.5"/><rect x="28" y="441.0" width="14" height="13.5" fill="#323232"/><rect x="50.3" y="438.2" width="20" height="20" fill="#6a6a6a"/><rect x="50.3" y="438.2" width="4" height="4" fill="#606060"/><rect x="58.3" y="438.2" width="4" height="4" fill="#606060"/><rect x="66.3" y="438.2" width="4" height="4" fill="#606060"/><rect x="54.3" y="442.2" width="4" height="4" fill="#606060"/><rect x="62.3" y="442.2" width="4" height="4" fill="#606060"/><rect x="50.3" y="446.2" width="4" height="4" fill="#606060"/><rect x="58.3" y="446.2" width="4" height="4" fill="#606060"/><rect x="66.3" y="446.2" width="4" height="4" fill="#606060"/><rect x="54.3" y="450.2" width="4" height="4" fill="#606060"/><rect x="62.3" y="450.2" width="4" height="4" fill="#606060"/><rect x="50.3" y="454.2" width="4" height="4" fill="#606060"/><rect x="58.3" y="454.2" width="4" height="4" fill="#606060"/><rect x="66.3" y="454.2" width="4" height="4" fill="#606060"/><rect x="51.3" y="442.2" width="18" height="15" fill="#6f6d68" opacity="0.9"/><rect x="52.8" y="443.8" width="4" height="3" fill="#87939a"/><rect x="58.3" y="443.8" width="4" height="3" fill="#8f8874"/><rect x="63.8" y="443.8" width="4" height="3" fill="#7f8d97"/><rect x="52.8" y="448.40000000000003" width="4" height="3" fill="#8f8874"/><rect x="58.3" y="448.40000000000003" width="4" height="3" fill="#87939a"/><rect x="63.8" y="448.40000000000003" width="4" height="3" fill="#8f8874"/><rect x="52.8" y="453.0" width="4" height="3" fill="#8f8874"/><rect x="58.3" y="453.0" width="4" height="3" fill="#87939a"/><rect x="63.8" y="453.0" width="4" height="3" fill="#87939a"/><path d="M51.3,444.2 l9,-5 l9,5" fill="none" stroke="#9a9a9a" stroke-width="1.2"/><path d="M77.6,445.2 V437 H82.4 L83.8,438.9 H86.7 V445.2 Z M77.6,439.9 H86.7" fill="none" stroke="#7e7e7e" stroke-width="1" /><path d="M77.6,437 H82.4 L83.8,438.9 L81,439.9 H77.6 Z" fill="#7e7e7e" opacity="0.8"/><path d="M79.4,448.4 L85,453.3 L79.4,458.2" fill="none" stroke="#cfcfcf" stroke-width="1.44" /><path d="M79.4,448.4 L85,453.3 L79.4,458.2" fill="none" stroke="#cfcfcf" stroke-width="0.8" /><rect x="240.9" y="446.2" width="12.1" height="7.7" fill="#727272"/><path d="M252,446.5 C252,442.9 250.5,440.9 247.4,440.3" fill="none" stroke="#727272" stroke-width="2" /><rect x="277" y="442.3" width="7" height="2.9" fill="#727272"/><rect x="285" y="442.3" width="7" height="2.9" fill="#727272"/><rect x="277" y="446.3" width="3" height="2.9" fill="#727272"/><rect x="281.1" y="446.3" width="6.9" height="2.9" fill="#727272"/><rect x="289.1" y="446.3" width="2.9" height="2.9" fill="#727272"/><rect x="277" y="450.3" width="7" height="2.9" fill="#727272"/><rect x="285" y="450.3" width="7" height="2.9" fill="#727272"/><path d="M5.5,474.5 c3,-6.8 11,-6.8 14,0 c-3,6.8 -11,6.8 -14,0 z" fill="none" stroke="#e6e6e6" stroke-width="1.2"/><path d="M6.1,473.9 c3,-6 9.8,-6 12.8,0 c-1,2 -2.5,3.4 -4,4.2 h-4.8 c-1.5,-0.8 -3,-2.2 -4,-4.2 z" fill="#e6e6e6"/><circle cx="12.5" cy="473.9" r="3.6" fill="#e6e6e6" stroke="#393939" stroke-width="1.3"/><rect x="28" y="468.0" width="14" height="13.5" fill="#323232"/><rect x="50.3" y="465.2" width="20" height="20.5" fill="#000"/><rect x="57.3" y="466.2" width="6" height="1.2" fill="#c8642d"/><rect x="51.3" y="467.59999999999997" width="18" height="1" fill="#b0562a"/><rect x="50.8" y="468.8" width="19" height="2.4" fill="#fff"/><rect x="51.8" y="472.0" width="1.6" height="3.2" fill="#d8dde0"/><rect x="54.4" y="472.0" width="1.6" height="3.2" fill="#d8dde0"/><rect x="57.0" y="472.0" width="1.6" height="3.2" fill="#d8dde0"/><rect x="59.599999999999994" y="472.0" width="1.6" height="3.2" fill="#d8dde0"/><rect x="62.199999999999996" y="472.0" width="1.6" height="3.2" fill="#d8dde0"/><rect x="64.8" y="472.0" width="1.6" height="3.2" fill="#d8dde0"/><rect x="67.4" y="472.0" width="1.6" height="3.2" fill="#d8dde0"/><rect x="50.8" y="475.8" width="19" height="2" fill="#fff"/><rect x="53.3" y="478.59999999999997" width="12" height="1.3" fill="#e9a02c"/><rect x="50.9" y="478.2" width="1.4" height="7.5" fill="#c8642d"/><rect x="68.3" y="478.2" width="1.4" height="7.5" fill="#c8642d"/><rect x="52.9" y="481.2" width="1.3" height="3.6" fill="#1c9a78"/><rect x="55.0" y="482.2" width="1.3" height="3.6" fill="#fff"/><rect x="57.1" y="481.2" width="1.3" height="3.6" fill="#e9a02c"/><rect x="59.2" y="482.2" width="1.3" height="3.6" fill="#fff"/><rect x="61.3" y="481.2" width="1.3" height="3.6" fill="#1c9a78"/><rect x="63.4" y="482.2" width="1.3" height="3.6" fill="#fff"/><rect x="65.5" y="481.2" width="1.3" height="3.6" fill="#d8d0b8"/><path d="M77.6,472.2 V464 H82.4 L83.8,465.9 H86.7 V472.2 Z M77.6,466.9 H86.7" fill="none" stroke="#e8e8e8" stroke-width="1" /><path d="M77.6,464 H82.4 L83.8,465.9 L81,466.9 H77.6 Z" fill="#e8e8e8" opacity="0.8"/><path d="M79.4,475.4 L85,480.3 L79.4,485.2" fill="none" stroke="#ffffff" stroke-width="1.44" /><path d="M79.4,475.4 L85,480.3 L79.4,485.2" fill="none" stroke="#ffffff" stroke-width="0.8" /><rect x="240.9" y="473.2" width="12.1" height="7.7" fill="#727272"/><path d="M252,473.5 C252,469.9 250.5,467.9 247.4,467.3" fill="none" stroke="#727272" stroke-width="2" /><rect x="277" y="469.3" width="7" height="2.9" fill="#727272"/><rect x="285" y="469.3" width="7" height="2.9" fill="#727272"/><rect x="277" y="473.3" width="3" height="2.9" fill="#727272"/><rect x="281.1" y="473.3" width="6.9" height="2.9" fill="#727272"/><rect x="289.1" y="473.3" width="2.9" height="2.9" fill="#727272"/><rect x="277" y="477.3" width="7" height="2.9" fill="#727272"/><rect x="285" y="477.3" width="7" height="2.9" fill="#727272"/><path d="M5.7,501.5 c3,-6.5 10.6,-6.5 13.6,0" fill="none" stroke="#505050" stroke-width="1"/><path d="M5.7,501.5 c3,6.5 10.6,6.5 13.6,0" fill="none" stroke="#5c5c5c" stroke-width="1.5"/><rect x="28" y="495.0" width="14" height="13.5" fill="#323232"/><rect x="50.3" y="492.2" width="20" height="20" fill="#6a6a6a"/><rect x="50.3" y="492.2" width="4" height="4" fill="#606060"/><rect x="58.3" y="492.2" width="4" height="4" fill="#606060"/><rect x="66.3" y="492.2" width="4" height="4" fill="#606060"/><rect x="54.3" y="496.2" width="4" height="4" fill="#606060"/><rect x="62.3" y="496.2" width="4" height="4" fill="#606060"/><rect x="50.3" y="500.2" width="4" height="4" fill="#606060"/><rect x="58.3" y="500.2" width="4" height="4" fill="#606060"/><rect x="66.3" y="500.2" width="4" height="4" fill="#606060"/><rect x="54.3" y="504.2" width="4" height="4" fill="#606060"/><rect x="62.3" y="504.2" width="4" height="4" fill="#606060"/><rect x="50.3" y="508.2" width="4" height="4" fill="#606060"/><rect x="58.3" y="508.2" width="4" height="4" fill="#606060"/><rect x="66.3" y="508.2" width="4" height="4" fill="#606060"/><rect x="51.3" y="496.2" width="18" height="15" fill="#6f6d68" opacity="0.9"/><rect x="52.8" y="497.8" width="4" height="3" fill="#6f8090"/><rect x="63.8" y="497.8" width="4" height="3" fill="#6f8090"/><rect x="52.8" y="502.40000000000003" width="4" height="3" fill="#7f8d97"/><rect x="58.3" y="502.40000000000003" width="4" height="3" fill="#8f8874"/><rect x="63.8" y="502.40000000000003" width="4" height="3" fill="#6f8090"/><rect x="52.8" y="507.0" width="4" height="3" fill="#8f8874"/><rect x="58.3" y="507.0" width="4" height="3" fill="#7f8d97"/><rect x="63.8" y="507.0" width="4" height="3" fill="#87939a"/><path d="M77.6,499.2 V491 H82.4 L83.8,492.9 H86.7 V499.2 Z M77.6,493.9 H86.7" fill="none" stroke="#7e7e7e" stroke-width="1" /><path d="M77.6,491 H82.4 L83.8,492.9 L81,493.9 H77.6 Z" fill="#7e7e7e" opacity="0.8"/><path d="M79.4,502.4 L85,507.3 L79.4,512.2" fill="none" stroke="#cfcfcf" stroke-width="1.44" /><path d="M79.4,502.4 L85,507.3 L79.4,512.2" fill="none" stroke="#cfcfcf" stroke-width="0.8" /><rect x="240.9" y="500.2" width="12.1" height="7.7" fill="#727272"/><path d="M252,500.5 C252,496.9 250.5,494.9 247.4,494.3" fill="none" stroke="#727272" stroke-width="2" /><rect x="277" y="496.3" width="7" height="2.9" fill="#727272"/><rect x="285" y="496.3" width="7" height="2.9" fill="#727272"/><rect x="277" y="500.3" width="3" height="2.9" fill="#727272"/><rect x="281.1" y="500.3" width="6.9" height="2.9" fill="#727272"/><rect x="289.1" y="500.3" width="2.9" height="2.9" fill="#727272"/><rect x="277" y="504.3" width="7" height="2.9" fill="#727272"/><rect x="285" y="504.3" width="7" height="2.9" fill="#727272"/><path d="M5.7,528.5 c3,-6.5 10.6,-6.5 13.6,0" fill="none" stroke="#505050" stroke-width="1"/><path d="M5.7,528.5 c3,6.5 10.6,6.5 13.6,0" fill="none" stroke="#5c5c5c" stroke-width="1.5"/><rect x="28" y="522.0" width="14" height="13.5" fill="#323232"/><rect x="50.3" y="519.2" width="20" height="20" fill="#6a6a6a"/><rect x="50.3" y="519.2" width="4" height="4" fill="#606060"/><rect x="58.3" y="519.2" width="4" height="4" fill="#606060"/><rect x="66.3" y="519.2" width="4" height="4" fill="#606060"/><rect x="54.3" y="523.2" width="4" height="4" fill="#606060"/><rect x="62.3" y="523.2" width="4" height="4" fill="#606060"/><rect x="50.3" y="527.2" width="4" height="4" fill="#606060"/><rect x="58.3" y="527.2" width="4" height="4" fill="#606060"/><rect x="66.3" y="527.2" width="4" height="4" fill="#606060"/><rect x="54.3" y="531.2" width="4" height="4" fill="#606060"/><rect x="62.3" y="531.2" width="4" height="4" fill="#606060"/><rect x="50.3" y="535.2" width="4" height="4" fill="#606060"/><rect x="58.3" y="535.2" width="4" height="4" fill="#606060"/><rect x="66.3" y="535.2" width="4" height="4" fill="#606060"/><rect x="51.3" y="523.2" width="18" height="15" fill="#6f6d68" opacity="0.9"/><rect x="52.8" y="524.8000000000001" width="4" height="3" fill="#87939a"/><rect x="58.3" y="524.8000000000001" width="4" height="3" fill="#87939a"/><rect x="63.8" y="524.8000000000001" width="4" height="3" fill="#7f8d97"/><rect x="52.8" y="529.4000000000001" width="4" height="3" fill="#87939a"/><rect x="63.8" y="529.4000000000001" width="4" height="3" fill="#7f8d97"/><rect x="52.8" y="534.0000000000001" width="4" height="3" fill="#7f8d97"/><rect x="58.3" y="534.0000000000001" width="4" height="3" fill="#87939a"/><path d="M51.3,525.2 l9,-5 l9,5" fill="none" stroke="#9a9a9a" stroke-width="1.2"/><path d="M77.6,526.2 V518 H82.4 L83.8,519.9 H86.7 V526.2 Z M77.6,520.9 H86.7" fill="none" stroke="#7e7e7e" stroke-width="1" /><path d="M77.6,518 H82.4 L83.8,519.9 L81,520.9 H77.6 Z" fill="#7e7e7e" opacity="0.8"/><path d="M79.4,529.4 L85,534.3 L79.4,539.2" fill="none" stroke="#cfcfcf" stroke-width="1.44" /><path d="M79.4,529.4 L85,534.3 L79.4,539.2" fill="none" stroke="#cfcfcf" stroke-width="0.8" /><rect x="240.9" y="527.2" width="12.1" height="7.7" fill="#727272"/><path d="M252,527.5 C252,523.9 250.5,521.9 247.4,521.3" fill="none" stroke="#727272" stroke-width="2" /><rect x="277" y="523.3" width="7" height="2.9" fill="#727272"/><rect x="285" y="523.3" width="7" height="2.9" fill="#727272"/><rect x="277" y="527.3" width="3" height="2.9" fill="#727272"/><rect x="281.1" y="527.3" width="6.9" height="2.9" fill="#727272"/><rect x="289.1" y="527.3" width="2.9" height="2.9" fill="#727272"/><rect x="277" y="531.3" width="7" height="2.9" fill="#727272"/><rect x="285" y="531.3" width="7" height="2.9" fill="#727272"/><path d="M5.7,555.5 c3,-6.5 10.6,-6.5 13.6,0" fill="none" stroke="#505050" stroke-width="1"/><path d="M5.7,555.5 c3,6.5 10.6,6.5 13.6,0" fill="none" stroke="#5c5c5c" stroke-width="1.5"/><rect x="28" y="549.0" width="14" height="13.5" fill="#323232"/><rect x="50.3" y="546.2" width="20" height="20" fill="#6a6a6a"/><rect x="50.3" y="546.2" width="4" height="4" fill="#606060"/><rect x="58.3" y="546.2" width="4" height="4" fill="#606060"/><rect x="66.3" y="546.2" width="4" height="4" fill="#606060"/><rect x="54.3" y="550.2" width="4" height="4" fill="#606060"/><rect x="62.3" y="550.2" width="4" height="4" fill="#606060"/><rect x="50.3" y="554.2" width="4" height="4" fill="#606060"/><rect x="58.3" y="554.2" width="4" height="4" fill="#606060"/><rect x="66.3" y="554.2" width="4" height="4" fill="#606060"/><rect x="54.3" y="558.2" width="4" height="4" fill="#606060"/><rect x="62.3" y="558.2" width="4" height="4" fill="#606060"/><rect x="50.3" y="562.2" width="4" height="4" fill="#606060"/><rect x="58.3" y="562.2" width="4" height="4" fill="#606060"/><rect x="66.3" y="562.2" width="4" height="4" fill="#606060"/><rect x="51.3" y="550.2" width="18" height="15" fill="#6f6d68" opacity="0.9"/><rect x="52.8" y="551.8000000000001" width="4" height="3" fill="#7f8d97"/><rect x="63.8" y="551.8000000000001" width="4" height="3" fill="#7f8d97"/><rect x="52.8" y="556.4000000000001" width="4" height="3" fill="#7f8d97"/><rect x="58.3" y="556.4000000000001" width="4" height="3" fill="#87939a"/><rect x="63.8" y="556.4000000000001" width="4" height="3" fill="#7f8d97"/><rect x="52.8" y="561.0000000000001" width="4" height="3" fill="#87939a"/><rect x="58.3" y="561.0000000000001" width="4" height="3" fill="#8f8874"/><rect x="63.8" y="561.0000000000001" width="4" height="3" fill="#87939a"/><path d="M77.6,553.2 V545 H82.4 L83.8,546.9 H86.7 V553.2 Z M77.6,547.9 H86.7" fill="none" stroke="#7e7e7e" stroke-width="1" /><path d="M77.6,545 H82.4 L83.8,546.9 L81,547.9 H77.6 Z" fill="#7e7e7e" opacity="0.8"/><path d="M79.4,556.4 L85,561.3 L79.4,566.2" fill="none" stroke="#cfcfcf" stroke-width="1.44" /><path d="M79.4,556.4 L85,561.3 L79.4,566.2" fill="none" stroke="#cfcfcf" stroke-width="0.8" /><rect x="240.9" y="554.2" width="12.1" height="7.7" fill="#727272"/><path d="M252,554.5 C252,550.9 250.5,548.9 247.4,548.3" fill="none" stroke="#727272" stroke-width="2" /><rect x="277" y="550.3" width="7" height="2.9" fill="#727272"/><rect x="285" y="550.3" width="7" height="2.9" fill="#727272"/><rect x="277" y="554.3" width="3" height="2.9" fill="#727272"/><rect x="281.1" y="554.3" width="6.9" height="2.9" fill="#727272"/><rect x="289.1" y="554.3" width="2.9" height="2.9" fill="#727272"/><rect x="277" y="558.3" width="7" height="2.9" fill="#727272"/><rect x="285" y="558.3" width="7" height="2.9" fill="#727272"/><path d="M5.7,582.5 c3,-6.5 10.6,-6.5 13.6,0" fill="none" stroke="#505050" stroke-width="1"/><path d="M5.7,582.5 c3,6.5 10.6,6.5 13.6,0" fill="none" stroke="#5c5c5c" stroke-width="1.5"/><rect x="28" y="576.0" width="14" height="13.5" fill="#323232"/><rect x="50.3" y="573.2" width="20" height="20" fill="#6a6a6a"/><rect x="50.3" y="573.2" width="4" height="4" fill="#606060"/><rect x="58.3" y="573.2" width="4" height="4" fill="#606060"/><rect x="66.3" y="573.2" width="4" height="4" fill="#606060"/><rect x="54.3" y="577.2" width="4" height="4" fill="#606060"/><rect x="62.3" y="577.2" width="4" height="4" fill="#606060"/><rect x="50.3" y="581.2" width="4" height="4" fill="#606060"/><rect x="58.3" y="581.2" width="4" height="4" fill="#606060"/><rect x="66.3" y="581.2" width="4" height="4" fill="#606060"/><rect x="54.3" y="585.2" width="4" height="4" fill="#606060"/><rect x="62.3" y="585.2" width="4" height="4" fill="#606060"/><rect x="50.3" y="589.2" width="4" height="4" fill="#606060"/><rect x="58.3" y="589.2" width="4" height="4" fill="#606060"/><rect x="66.3" y="589.2" width="4" height="4" fill="#606060"/><rect x="51.3" y="577.2" width="18" height="15" fill="#6f6d68" opacity="0.9"/><rect x="52.8" y="578.8000000000001" width="4" height="3" fill="#8f8874"/><rect x="63.8" y="578.8000000000001" width="4" height="3" fill="#6f8090"/><rect x="52.8" y="583.4000000000001" width="4" height="3" fill="#6f8090"/><rect x="58.3" y="583.4000000000001" width="4" height="3" fill="#87939a"/><rect x="63.8" y="583.4000000000001" width="4" height="3" fill="#6f8090"/><rect x="52.8" y="588.0000000000001" width="4" height="3" fill="#6f8090"/><rect x="58.3" y="588.0000000000001" width="4" height="3" fill="#6f8090"/><rect x="63.8" y="588.0000000000001" width="4" height="3" fill="#8f8874"/><path d="M77.6,580.2 V572 H82.4 L83.8,573.9 H86.7 V580.2 Z M77.6,574.9 H86.7" fill="none" stroke="#7e7e7e" stroke-width="1" /><path d="M77.6,572 H82.4 L83.8,573.9 L81,574.9 H77.6 Z" fill="#7e7e7e" opacity="0.8"/><path d="M79.4,583.4 L85,588.3 L79.4,593.2" fill="none" stroke="#cfcfcf" stroke-width="1.44" /><path d="M79.4,583.4 L85,588.3 L79.4,593.2" fill="none" stroke="#cfcfcf" stroke-width="0.8" /><rect x="240.9" y="581.2" width="12.1" height="7.7" fill="#727272"/><path d="M252,581.5 C252,577.9 250.5,575.9 247.4,575.3" fill="none" stroke="#727272" stroke-width="2" /><rect x="277" y="577.3" width="7" height="2.9" fill="#727272"/><rect x="285" y="577.3" width="7" height="2.9" fill="#727272"/><rect x="277" y="581.3" width="3" height="2.9" fill="#727272"/><rect x="281.1" y="581.3" width="6.9" height="2.9" fill="#727272"/><rect x="289.1" y="581.3" width="2.9" height="2.9" fill="#727272"/><rect x="277" y="585.3" width="7" height="2.9" fill="#727272"/><rect x="285" y="585.3" width="7" height="2.9" fill="#727272"/><path d="M5.7,609.5 c3,-6.5 10.6,-6.5 13.6,0" fill="none" stroke="#505050" stroke-width="1"/><path d="M5.7,609.5 c3,6.5 10.6,6.5 13.6,0" fill="none" stroke="#5c5c5c" stroke-width="1.5"/><rect x="28" y="603.0" width="14" height="13.5" fill="#323232"/><rect x="50.3" y="600.2" width="20" height="20" fill="#6a6a6a"/><rect x="50.3" y="600.2" width="4" height="4" fill="#606060"/><rect x="58.3" y="600.2" width="4" height="4" fill="#606060"/><rect x="66.3" y="600.2" width="4" height="4" fill="#606060"/><rect x="54.3" y="604.2" width="4" height="4" fill="#606060"/><rect x="62.3" y="604.2" width="4" height="4" fill="#606060"/><rect x="50.3" y="608.2" width="4" height="4" fill="#606060"/><rect x="58.3" y="608.2" width="4" height="4" fill="#606060"/><rect x="66.3" y="608.2" width="4" height="4" fill="#606060"/><rect x="54.3" y="612.2" width="4" height="4" fill="#606060"/><rect x="62.3" y="612.2" width="4" height="4" fill="#606060"/><rect x="50.3" y="616.2" width="4" height="4" fill="#606060"/><rect x="58.3" y="616.2" width="4" height="4" fill="#606060"/><rect x="66.3" y="616.2" width="4" height="4" fill="#606060"/><rect x="51.3" y="604.2" width="18" height="15" fill="#6f6d68" opacity="0.9"/><rect x="52.8" y="605.8000000000001" width="4" height="3" fill="#8f8874"/><rect x="58.3" y="605.8000000000001" width="4" height="3" fill="#6f8090"/><rect x="63.8" y="605.8000000000001" width="4" height="3" fill="#7f8d97"/><rect x="52.8" y="610.4000000000001" width="4" height="3" fill="#7f8d97"/><rect x="58.3" y="610.4000000000001" width="4" height="3" fill="#7f8d97"/><rect x="58.3" y="615.0000000000001" width="4" height="3" fill="#7f8d97"/><rect x="63.8" y="615.0000000000001" width="4" height="3" fill="#87939a"/><path d="M77.6,607.2 V599 H82.4 L83.8,600.9 H86.7 V607.2 Z M77.6,601.9 H86.7" fill="none" stroke="#7e7e7e" stroke-width="1" /><path d="M77.6,599 H82.4 L83.8,600.9 L81,601.9 H77.6 Z" fill="#7e7e7e" opacity="0.8"/><path d="M79.4,610.4 L85,615.3 L79.4,620.2" fill="none" stroke="#cfcfcf" stroke-width="1.44" /><path d="M79.4,610.4 L85,615.3 L79.4,620.2" fill="none" stroke="#cfcfcf" stroke-width="0.8" /><rect x="240.9" y="608.2" width="12.1" height="7.7" fill="#727272"/><path d="M252,608.5 C252,604.9 250.5,602.9 247.4,602.3" fill="none" stroke="#727272" stroke-width="2" /><rect x="277" y="604.3" width="7" height="2.9" fill="#727272"/><rect x="285" y="604.3" width="7" height="2.9" fill="#727272"/><rect x="277" y="608.3" width="3" height="2.9" fill="#727272"/><rect x="281.1" y="608.3" width="6.9" height="2.9" fill="#727272"/><rect x="289.1" y="608.3" width="2.9" height="2.9" fill="#727272"/><rect x="277" y="612.3" width="7" height="2.9" fill="#727272"/><rect x="285" y="612.3" width="7" height="2.9" fill="#727272"/><path d="M5.7,636.5 c3,-6.5 10.6,-6.5 13.6,0" fill="none" stroke="#505050" stroke-width="1"/><path d="M5.7,636.5 c3,6.5 10.6,6.5 13.6,0" fill="none" stroke="#5c5c5c" stroke-width="1.5"/><rect x="28" y="630.0" width="14" height="13.5" fill="#323232"/><rect x="50.3" y="627.2" width="20" height="20" fill="#6a6a6a"/><rect x="50.3" y="627.2" width="4" height="4" fill="#606060"/><rect x="58.3" y="627.2" width="4" height="4" fill="#606060"/><rect x="66.3" y="627.2" width="4" height="4" fill="#606060"/><rect x="54.3" y="631.2" width="4" height="4" fill="#606060"/><rect x="62.3" y="631.2" width="4" height="4" fill="#606060"/><rect x="50.3" y="635.2" width="4" height="4" fill="#606060"/><rect x="58.3" y="635.2" width="4" height="4" fill="#606060"/><rect x="66.3" y="635.2" width="4" height="4" fill="#606060"/><rect x="54.3" y="639.2" width="4" height="4" fill="#606060"/><rect x="62.3" y="639.2" width="4" height="4" fill="#606060"/><rect x="50.3" y="643.2" width="4" height="4" fill="#606060"/><rect x="58.3" y="643.2" width="4" height="4" fill="#606060"/><rect x="66.3" y="643.2" width="4" height="4" fill="#606060"/><rect x="51.3" y="634.2" width="18" height="7" fill="#7d7a70"/><rect x="52.3" y="636.2" width="16" height="2" fill="#9aa4aa"/><path d="M77.6,634.2 V626 H82.4 L83.8,627.9 H86.7 V634.2 Z M77.6,628.9 H86.7" fill="none" stroke="#7e7e7e" stroke-width="1" /><path d="M77.6,626 H82.4 L83.8,627.9 L81,628.9 H77.6 Z" fill="#7e7e7e" opacity="0.8"/><path d="M79.4,637.4 L85,642.3 L79.4,647.2" fill="none" stroke="#cfcfcf" stroke-width="1.44" /><path d="M79.4,637.4 L85,642.3 L79.4,647.2" fill="none" stroke="#cfcfcf" stroke-width="0.8" /><rect x="240.9" y="635.2" width="12.1" height="7.7" fill="#727272"/><path d="M252,635.5 C252,631.9 250.5,629.9 247.4,629.3" fill="none" stroke="#727272" stroke-width="2" /><rect x="277" y="631.3" width="7" height="2.9" fill="#727272"/><rect x="285" y="631.3" width="7" height="2.9" fill="#727272"/><rect x="277" y="635.3" width="3" height="2.9" fill="#727272"/><rect x="281.1" y="635.3" width="6.9" height="2.9" fill="#727272"/><rect x="289.1" y="635.3" width="2.9" height="2.9" fill="#727272"/><rect x="277" y="639.3" width="7" height="2.9" fill="#727272"/><rect x="285" y="639.3" width="7" height="2.9" fill="#727272"/><path d="M5.7,663.5 c3,-6.5 10.6,-6.5 13.6,0" fill="none" stroke="#505050" stroke-width="1"/><path d="M5.7,663.5 c3,6.5 10.6,6.5 13.6,0" fill="none" stroke="#5c5c5c" stroke-width="1.5"/><rect x="28" y="657.0" width="14" height="13.5" fill="#323232"/><rect x="50.3" y="654.2" width="20" height="20" fill="#6a6a6a"/><rect x="50.3" y="654.2" width="4" height="4" fill="#606060"/><rect x="58.3" y="654.2" width="4" height="4" fill="#606060"/><rect x="66.3" y="654.2" width="4" height="4" fill="#606060"/><rect x="54.3" y="658.2" width="4" height="4" fill="#606060"/><rect x="62.3" y="658.2" width="4" height="4" fill="#606060"/><rect x="50.3" y="662.2" width="4" height="4" fill="#606060"/><rect x="58.3" y="662.2" width="4" height="4" fill="#606060"/><rect x="66.3" y="662.2" width="4" height="4" fill="#606060"/><rect x="54.3" y="666.2" width="4" height="4" fill="#606060"/><rect x="62.3" y="666.2" width="4" height="4" fill="#606060"/><rect x="50.3" y="670.2" width="4" height="4" fill="#606060"/><rect x="58.3" y="670.2" width="4" height="4" fill="#606060"/><rect x="66.3" y="670.2" width="4" height="4" fill="#606060"/><rect x="51.3" y="658.2" width="18" height="15" fill="#6f6d68" opacity="0.9"/><rect x="52.8" y="659.8000000000001" width="4" height="3" fill="#8f8874"/><rect x="58.3" y="659.8000000000001" width="4" height="3" fill="#6f8090"/><rect x="63.8" y="659.8000000000001" width="4" height="3" fill="#7f8d97"/><rect x="58.3" y="664.4000000000001" width="4" height="3" fill="#8f8874"/><rect x="52.8" y="669.0000000000001" width="4" height="3" fill="#87939a"/><rect x="58.3" y="669.0000000000001" width="4" height="3" fill="#6f8090"/><path d="M77.6,661.2 V653 H82.4 L83.8,654.9 H86.7 V661.2 Z M77.6,655.9 H86.7" fill="none" stroke="#7e7e7e" stroke-width="1" /><path d="M77.6,653 H82.4 L83.8,654.9 L81,655.9 H77.6 Z" fill="#7e7e7e" opacity="0.8"/><path d="M79.4,664.4 L85,669.3 L79.4,674.2" fill="none" stroke="#cfcfcf" stroke-width="1.44" /><path d="M79.4,664.4 L85,669.3 L79.4,674.2" fill="none" stroke="#cfcfcf" stroke-width="0.8" /><rect x="240.9" y="662.2" width="12.1" height="7.7" fill="#727272"/><path d="M252,662.5 C252,658.9 250.5,656.9 247.4,656.3" fill="none" stroke="#727272" stroke-width="2" /><rect x="277" y="658.3" width="7" height="2.9" fill="#727272"/><rect x="285" y="658.3" width="7" height="2.9" fill="#727272"/><rect x="277" y="662.3" width="3" height="2.9" fill="#727272"/><rect x="281.1" y="662.3" width="6.9" height="2.9" fill="#727272"/><rect x="289.1" y="662.3" width="2.9" height="2.9" fill="#727272"/><rect x="277" y="666.3" width="7" height="2.9" fill="#727272"/><rect x="285" y="666.3" width="7" height="2.9" fill="#727272"/><path d="M5.7,690.5 c3,-6.5 10.6,-6.5 13.6,0" fill="none" stroke="#505050" stroke-width="1"/><path d="M5.7,690.5 c3,6.5 10.6,6.5 13.6,0" fill="none" stroke="#5c5c5c" stroke-width="1.5"/><rect x="28" y="684.0" width="14" height="13.5" fill="#323232"/><rect x="50.3" y="681.2" width="20" height="20" fill="#6a6a6a"/><rect x="50.3" y="681.2" width="4" height="4" fill="#606060"/><rect x="58.3" y="681.2" width="4" height="4" fill="#606060"/><rect x="66.3" y="681.2" width="4" height="4" fill="#606060"/><rect x="54.3" y="685.2" width="4" height="4" fill="#606060"/><rect x="62.3" y="685.2" width="4" height="4" fill="#606060"/><rect x="50.3" y="689.2" width="4" height="4" fill="#606060"/><rect x="58.3" y="689.2" width="4" height="4" fill="#606060"/><rect x="66.3" y="689.2" width="4" height="4" fill="#606060"/><rect x="54.3" y="693.2" width="4" height="4" fill="#606060"/><rect x="62.3" y="693.2" width="4" height="4" fill="#606060"/><rect x="50.3" y="697.2" width="4" height="4" fill="#606060"/><rect x="58.3" y="697.2" width="4" height="4" fill="#606060"/><rect x="66.3" y="697.2" width="4" height="4" fill="#606060"/><rect x="51.3" y="685.2" width="18" height="15" fill="#6f6d68" opacity="0.9"/><rect x="52.8" y="686.8000000000001" width="4" height="3" fill="#8f8874"/><rect x="52.8" y="691.4000000000001" width="4" height="3" fill="#7f8d97"/><rect x="58.3" y="691.4000000000001" width="4" height="3" fill="#8f8874"/><rect x="63.8" y="691.4000000000001" width="4" height="3" fill="#87939a"/><rect x="58.3" y="696.0000000000001" width="4" height="3" fill="#6f8090"/><rect x="63.8" y="696.0000000000001" width="4" height="3" fill="#8f8874"/><path d="M77.6,688.2 V680 H82.4 L83.8,681.9 H86.7 V688.2 Z M77.6,682.9 H86.7" fill="none" stroke="#7e7e7e" stroke-width="1" /><path d="M77.6,680 H82.4 L83.8,681.9 L81,682.9 H77.6 Z" fill="#7e7e7e" opacity="0.8"/><path d="M79.4,691.4 L85,696.3 L79.4,701.2" fill="none" stroke="#cfcfcf" stroke-width="1.44" /><path d="M79.4,691.4 L85,696.3 L79.4,701.2" fill="none" stroke="#cfcfcf" stroke-width="0.8" /><rect x="240.9" y="689.2" width="12.1" height="7.7" fill="#727272"/><path d="M252,689.5 C252,685.9 250.5,683.9 247.4,683.3" fill="none" stroke="#727272" stroke-width="2" /><rect x="277" y="685.3" width="7" height="2.9" fill="#727272"/><rect x="285" y="685.3" width="7" height="2.9" fill="#727272"/><rect x="277" y="689.3" width="3" height="2.9" fill="#727272"/><rect x="281.1" y="689.3" width="6.9" height="2.9" fill="#727272"/><rect x="289.1" y="689.3" width="2.9" height="2.9" fill="#727272"/><rect x="277" y="693.3" width="7" height="2.9" fill="#727272"/><rect x="285" y="693.3" width="7" height="2.9" fill="#727272"/><path d="M5.7,717.5 c3,-6.5 10.6,-6.5 13.6,0" fill="none" stroke="#505050" stroke-width="1"/><path d="M5.7,717.5 c3,6.5 10.6,6.5 13.6,0" fill="none" stroke="#5c5c5c" stroke-width="1.5"/><rect x="28" y="711.0" width="14" height="13.5" fill="#323232"/><rect x="50.3" y="708.2" width="20" height="20" fill="#6a6a6a"/><rect x="50.3" y="708.2" width="4" height="4" fill="#606060"/><rect x="58.3" y="708.2" width="4" height="4" fill="#606060"/><rect x="66.3" y="708.2" width="4" height="4" fill="#606060"/><rect x="54.3" y="712.2" width="4" height="4" fill="#606060"/><rect x="62.3" y="712.2" width="4" height="4" fill="#606060"/><rect x="50.3" y="716.2" width="4" height="4" fill="#606060"/><rect x="58.3" y="716.2" width="4" height="4" fill="#606060"/><rect x="66.3" y="716.2" width="4" height="4" fill="#606060"/><rect x="54.3" y="720.2" width="4" height="4" fill="#606060"/><rect x="62.3" y="720.2" width="4" height="4" fill="#606060"/><rect x="50.3" y="724.2" width="4" height="4" fill="#606060"/><rect x="58.3" y="724.2" width="4" height="4" fill="#606060"/><rect x="66.3" y="724.2" width="4" height="4" fill="#606060"/><path d="M60.3,710.2 l7,17.5 h-14 z" fill="#8a8478"/><path d="M60.3,716.2 l2,11.5 h-4 z" fill="#5a6a7a"/><path d="M77.6,715.2 V707 H82.4 L83.8,708.9 H86.7 V715.2 Z M77.6,709.9 H86.7" fill="none" stroke="#7e7e7e" stroke-width="1" /><path d="M77.6,707 H82.4 L83.8,708.9 L81,709.9 H77.6 Z" fill="#7e7e7e" opacity="0.8"/><path d="M79.4,718.4 L85,723.3 L79.4,728.2" fill="none" stroke="#cfcfcf" stroke-width="1.44" /><path d="M79.4,718.4 L85,723.3 L79.4,728.2" fill="none" stroke="#cfcfcf" stroke-width="0.8" /><rect x="240.9" y="716.2" width="12.1" height="7.7" fill="#727272"/><path d="M252,716.5 C252,712.9 250.5,710.9 247.4,710.3" fill="none" stroke="#727272" stroke-width="2" /><rect x="277" y="712.3" width="7" height="2.9" fill="#727272"/><rect x="285" y="712.3" width="7" height="2.9" fill="#727272"/><rect x="277" y="716.3" width="3" height="2.9" fill="#727272"/><rect x="281.1" y="716.3" width="6.9" height="2.9" fill="#727272"/><rect x="289.1" y="716.3" width="2.9" height="2.9" fill="#727272"/><rect x="277" y="720.3" width="7" height="2.9" fill="#727272"/><rect x="285" y="720.3" width="7" height="2.9" fill="#727272"/><path d="M5.7,744.5 c3,-6.5 10.6,-6.5 13.6,0" fill="none" stroke="#505050" stroke-width="1"/><path d="M5.7,744.5 c3,6.5 10.6,6.5 13.6,0" fill="none" stroke="#5c5c5c" stroke-width="1.5"/><rect x="28" y="738.0" width="14" height="13.5" fill="#323232"/><rect x="50.3" y="735.2" width="20" height="20" fill="#7f9fb8"/><rect x="50.3" y="735.2" width="5" height="5" fill="#7697b1"/><rect x="60.3" y="735.2" width="5" height="5" fill="#7697b1"/><rect x="55.3" y="740.2" width="5" height="5" fill="#7697b1"/><rect x="65.3" y="740.2" width="5" height="5" fill="#7697b1"/><rect x="50.3" y="745.2" width="5" height="5" fill="#7697b1"/><rect x="60.3" y="745.2" width="5" height="5" fill="#7697b1"/><rect x="55.3" y="750.2" width="5" height="5" fill="#7697b1"/><rect x="65.3" y="750.2" width="5" height="5" fill="#7697b1"/><path d="M76.5,735.5 h9.5 v9.5 M76.5,735.5 l7,7 M79.5,743 h4.5 v-4.5" fill="none" stroke="#8a8a8a" stroke-width="1" /><rect x="240.9" y="743.2" width="12.1" height="7.7" fill="#727272"/><path d="M252,743.5 C252,739.9 250.5,737.9 247.4,737.3" fill="none" stroke="#727272" stroke-width="2" /><rect x="277" y="737.5" width="15" height="15" fill="#5a5a5a"/><rect x="277" y="737.5" width="5" height="5" fill="#7c7c7c"/><rect x="287" y="737.5" width="5" height="5" fill="#7c7c7c"/><rect x="282" y="742.5" width="5" height="5" fill="#7c7c7c"/><rect x="277" y="747.5" width="5" height="5" fill="#7c7c7c"/><rect x="287" y="747.5" width="5" height="5" fill="#7c7c7c"/><path d="M5.5,771.5 c3,-6.8 11,-6.8 14,0 c-3,6.8 -11,6.8 -14,0 z" fill="none" stroke="#e6e6e6" stroke-width="1.2"/><path d="M6.1,770.9 c3,-6 9.8,-6 12.8,0 c-1,2 -2.5,3.4 -4,4.2 h-4.8 c-1.5,-0.8 -3,-2.2 -4,-4.2 z" fill="#e6e6e6"/><circle cx="12.5" cy="770.9" r="3.6" fill="#e6e6e6" stroke="#393939" stroke-width="1.3"/><rect x="28" y="765.0" width="14" height="13.5" fill="#323232"/><rect x="50.3" y="762.2" width="20" height="20" fill="#000"/><path d="M76.5,762.5 h9.5 v9.5 M76.5,762.5 l7,7 M79.5,770 h4.5 v-4.5" fill="none" stroke="#d0d0d0" stroke-width="1" /><rect x="240.9" y="770.2" width="12.1" height="7.7" fill="#727272"/><path d="M252,770.5 C252,766.9 250.5,764.9 247.4,764.3" fill="none" stroke="#727272" stroke-width="2" /><rect x="277" y="764.5" width="15" height="15" fill="#5a5a5a"/><rect x="277" y="764.5" width="5" height="5" fill="#7c7c7c"/><rect x="287" y="764.5" width="5" height="5" fill="#7c7c7c"/><rect x="282" y="769.5" width="5" height="5" fill="#7c7c7c"/><rect x="277" y="774.5" width="5" height="5" fill="#7c7c7c"/><rect x="287" y="774.5" width="5" height="5" fill="#7c7c7c"/><rect x="301" y="489" width="2" height="2" fill="#9c9c9c"/><rect x="301" y="492" width="2" height="2" fill="#9c9c9c"/><rect x="301" y="495" width="2" height="2" fill="#9c9c9c"/><rect x="301" y="498" width="2" height="2" fill="#9c9c9c"/><rect x="301" y="501" width="2" height="2" fill="#9c9c9c"/><rect x="301" y="504" width="2" height="2" fill="#9c9c9c"/><path d="M6.5,848.8 h18 M15.5,839.8 v18" fill="none" stroke="#d4d4d4" stroke-width="2.16" /><path d="M33.6,846.0 h9.6 l-4.8,5 z" fill="#8c8c8c"/><path d="M58.5,844.3 h-4.5 v14 h14 v-4.5 M58.5,839.8 h13.5 v14 h-13.5 z" fill="none" stroke="#d4d4d4" stroke-width="1.8" /><path d="M85,844.8 l10,8.5 l10,-8.5" fill="none" stroke="#d4d4d4" stroke-width="2.16" /><path d="M117,852.8 l10,-8.5 l10,8.5" fill="none" stroke="#d4d4d4" stroke-width="2.16" /><path d="M149,842.8 h20 M149,848.8 h20 M149,854.8 h20" fill="none" stroke="#d4d4d4" stroke-width="1.8" /><rect x="161" y="840.3" width="2.6" height="5" fill="#d4d4d4"/><rect x="153" y="846.3" width="2.6" height="5" fill="#d4d4d4"/><rect x="158" y="852.3" width="2.6" height="5" fill="#d4d4d4"/><path d="M176.6,846.5 h9.6 l-4.8,5 z" fill="#8c8c8c"/><path d="M272,842.5999999999999 h18 v2.2 h-18 z M276.8,840.8 a1.6,1.6 0 0 1 1.6,-1.4 h5.2 a1.6,1.6 0 0 1 1.6,1.4 v1.4 h-8.4 z M274.2,846.1999999999999 h13.6 v10.4 c0,1.2 -0.6,1.8 -1.8,1.8 h-10 c-1.2,0 -1.8,-0.6 -1.8,-1.8 z" fill="#d4d4d4"/></svg>
<div class="a " style="left:304px;top:165px;width:809px;height:1px;background:#5a5a5a;"></div>
<div class="a " style="left:304px;top:129px;width:808px;height:37px;background:#424242;border:1px solid #5a5a5a;border-bottom:none;border-radius:4px 4px 0 0;"></div>
<div class="a " style="left:304px;top:165px;width:809px;height:1px;background:#5a5a5a;"></div>
<div class="a " style="left:1113px;top:127px;width:806px;height:40px;background:#484848;border:1px solid #5e5e5e;border-bottom:none;border-radius:4px 4px 0 0;"></div>
<span class="t" style="left:591.0px;top:141.4px;font-size:14px;line-height:14px;letter-spacing:0.133px;color:#d6d6d6;">structures_384x384.kra (41.1 MiB) *</span>
<span class="t" style="left:1399.0px;top:140.1px;font-size:14px;line-height:14px;letter-spacing:0.133px;color:#d6d6d6;">structures_256x256.kra (39.9 MiB) *</span>
<div class="a " style="left:326px;top:167px;width:1594px;height:21px;background:#404040;"></div>
<div class="a " style="left:304.5px;top:188px;width:21.5px;height:677px;background:#404040;"></div>
<div class="a " style="left:802px;top:167px;width:524px;height:21px;background:#323232;"></div>
<div class="a " style="left:304.5px;top:267.5px;width:21.5px;height:515.5px;background:#323232;"></div>
<div class="a " style="left:326px;top:188px;width:1577px;height:660px;background:#828282;"></div>
<span class="t" style="left:798.0px;top:169.8px;font-size:12px;line-height:12px;letter-spacing:0.000px;color:#d6d6d6;">0</span>
<span class="t" style="left:894.6px;top:169.8px;font-size:12px;line-height:12px;letter-spacing:0.000px;color:#d6d6d6;">50</span>
<span class="t" style="left:991.3px;top:169.8px;font-size:12px;line-height:12px;letter-spacing:0.000px;color:#d6d6d6;">100</span>
<span class="t" style="left:1091.3px;top:169.8px;font-size:12px;line-height:12px;letter-spacing:-0.000px;color:#d6d6d6;">150</span>
<span class="t" style="left:1191.3px;top:169.8px;font-size:12px;line-height:12px;letter-spacing:-0.000px;color:#d6d6d6;">200</span>
<span class="t" style="left:1291.3px;top:169.8px;font-size:12px;line-height:12px;letter-spacing:-0.000px;color:#d6d6d6;">250</span>
<span class="t" style="left:308.8px;top:261.4px;font-size:12px;line-height:12px;color:#d6d6d6;transform-origin:0 0;transform:translate(0px,9.3px) rotate(-90deg);">0</span>
<span class="t" style="left:308.8px;top:361.4px;font-size:12px;line-height:12px;color:#d6d6d6;transform-origin:0 0;transform:translate(0px,12.7px) rotate(-90deg);">50</span>
<span class="t" style="left:308.8px;top:461.4px;font-size:12px;line-height:12px;color:#d6d6d6;transform-origin:0 0;transform:translate(0px,16.0px) rotate(-90deg);">100</span>
<span class="t" style="left:308.8px;top:561.4px;font-size:12px;line-height:12px;color:#d6d6d6;transform-origin:0 0;transform:translate(0px,16.0px) rotate(-90deg);">150</span>
<span class="t" style="left:308.8px;top:661.4px;font-size:12px;line-height:12px;color:#d6d6d6;transform-origin:0 0;transform:translate(0px,16.0px) rotate(-90deg);">200</span>
<span class="t" style="left:308.8px;top:761.4px;font-size:12px;line-height:12px;color:#d6d6d6;transform-origin:0 0;transform:translate(0px,16.0px) rotate(-90deg);">250</span>
<div class="a " style="left:1903px;top:188px;width:17px;height:660px;background:#3d3d3d;border-left:1px solid #353535;"></div>
<div class="a " style="left:1903px;top:188px;width:17px;height:17px;background:#484848;border:1px solid #585858;"></div>
<div class="a " style="left:1904px;top:395px;width:16px;height:243px;background:linear-gradient(90deg,#474747,#3f3f3f);border:1px solid #5a5a5a;"></div>
<div class="a " style="left:1903px;top:831px;width:17px;height:17px;background:#484848;border:1px solid #585858;"></div>
<div class="a " style="left:326px;top:848px;width:1577px;height:17.4px;background:#3d3d3d;border-top:1px solid #353535;"></div>
<div class="a " style="left:326px;top:849px;width:16px;height:16px;background:#444444;border:1px solid #5a5a5a;"></div>
<div class="a " style="left:778px;top:849px;width:726px;height:16px;background:linear-gradient(#474747,#3f3f3f);border:1px solid #5a5a5a;"></div>
<div class="a " style="left:1887px;top:849px;width:16px;height:16px;background:#444444;border:1px solid #5a5a5a;"></div>
<svg class="a" style="left:0;top:0" width="1920" height="880" viewBox="0 0 1920 880"><g transform="translate(329,146.2)"><foreignObject x="-8.1" y="-8.1" width="16.2" height="16.2"><div style="width:16.2px;height:16.2px;border-radius:50%;background:radial-gradient(circle at 50% 50%,rgba(255,255,255,0.55) 0%,rgba(255,255,255,0) 55%),conic-gradient(from 0deg,#ff38ff,#ff60d0 40deg,#ffa070 90deg,#f4ff30 135deg,#50ff80 170deg,#20f4f0 215deg,#50a0ff 260deg,#a070ff 300deg,#ff38ff 360deg);"></div></foreignObject><path d="M-8.748,-7.452 L0.405,0.162" stroke="#3c3c3c" stroke-width="2.4299999999999997" stroke-linecap="round"/><path d="M0.162,0.0 L2.4299999999999997,1.944" stroke="#c4c4c4" stroke-width="2.592"/><path d="M2.2680000000000002,1.1340000000000001 c2.592,0.486 3.4019999999999997,2.916 1.944,4.859999999999999 c-1.782,-0.324 -3.564,-2.2680000000000002 -1.944,-4.859999999999999 z" fill="#202020"/></g><g transform="translate(1137,145)"><foreignObject x="-8.1" y="-8.1" width="16.2" height="16.2"><div style="width:16.2px;height:16.2px;border-radius:50%;background:radial-gradient(circle at 50% 50%,rgba(255,255,255,0.55) 0%,rgba(255,255,255,0) 55%),conic-gradient(from 0deg,#ff38ff,#ff60d0 40deg,#ffa070 90deg,#f4ff30 135deg,#50ff80 170deg,#20f4f0 215deg,#50a0ff 260deg,#a070ff 300deg,#ff38ff 360deg);"></div></foreignObject><path d="M-8.748,-7.452 L0.405,0.162" stroke="#3c3c3c" stroke-width="2.4299999999999997" stroke-linecap="round"/><path d="M0.162,0.0 L2.4299999999999997,1.944" stroke="#c4c4c4" stroke-width="2.592"/><path d="M2.2680000000000002,1.1340000000000001 c2.592,0.486 3.4019999999999997,2.916 1.944,4.859999999999999 c-1.782,-0.324 -3.564,-2.2680000000000002 -1.944,-4.859999999999999 z" fill="#202020"/></g><path d="M1076.5,142.5 l13.0,13.0 M1089.5,142.5 l-13.0,13.0" fill="none" stroke="#dcdcdc" stroke-width="2.9" /><path d="M1884.5,141.7 l13.0,13.0 M1897.5,141.7 l-13.0,13.0" fill="none" stroke="#dcdcdc" stroke-width="2.9" /><rect x="800.9" y="181.0" width="1.2" height="6.3" fill="#dadada"/><rect x="825.9" y="184.10000000000002" width="1.2" height="3.2" fill="#dadada"/><rect x="850.9" y="181.0" width="1.2" height="6.3" fill="#dadada"/><rect x="875.9" y="184.10000000000002" width="1.2" height="3.2" fill="#dadada"/><rect x="900.9" y="181.0" width="1.2" height="6.3" fill="#dadada"/><rect x="925.9" y="184.10000000000002" width="1.2" height="3.2" fill="#dadada"/><rect x="950.9" y="181.0" width="1.2" height="6.3" fill="#dadada"/><rect x="975.9" y="184.10000000000002" width="1.2" height="3.2" fill="#dadada"/><rect x="1000.9" y="181.0" width="1.2" height="6.3" fill="#dadada"/><rect x="1025.9" y="184.10000000000002" width="1.2" height="3.2" fill="#dadada"/><rect x="1050.9" y="181.0" width="1.2" height="6.3" fill="#dadada"/><rect x="1075.9" y="184.10000000000002" width="1.2" height="3.2" fill="#dadada"/><rect x="1100.9" y="181.0" width="1.2" height="6.3" fill="#dadada"/><rect x="1125.9" y="184.10000000000002" width="1.2" height="3.2" fill="#dadada"/><rect x="1150.9" y="181.0" width="1.2" height="6.3" fill="#dadada"/><rect x="1175.9" y="184.10000000000002" width="1.2" height="3.2" fill="#dadada"/><rect x="1200.9" y="181.0" width="1.2" height="6.3" fill="#dadada"/><rect x="1225.9" y="184.10000000000002" width="1.2" height="3.2" fill="#dadada"/><rect x="1250.9" y="181.0" width="1.2" height="6.3" fill="#dadada"/><rect x="1275.9" y="184.10000000000002" width="1.2" height="3.2" fill="#dadada"/><rect x="1300.9" y="181.0" width="1.2" height="6.3" fill="#dadada"/><rect x="1325.9" y="184.10000000000002" width="1.2" height="3.2" fill="#dadada"/><rect x="318.59999999999997" y="266.9" width="6.6" height="1.2" fill="#dadada"/><rect x="322.0" y="291.9" width="3.2" height="1.2" fill="#dadada"/><rect x="318.59999999999997" y="316.9" width="6.6" height="1.2" fill="#dadada"/><rect x="322.0" y="341.9" width="3.2" height="1.2" fill="#dadada"/><rect x="318.59999999999997" y="366.9" width="6.6" height="1.2" fill="#dadada"/><rect x="322.0" y="391.9" width="3.2" height="1.2" fill="#dadada"/><rect x="318.59999999999997" y="416.9" width="6.6" height="1.2" fill="#dadada"/><rect x="322.0" y="441.9" width="3.2" height="1.2" fill="#dadada"/><rect x="318.59999999999997" y="466.9" width="6.6" height="1.2" fill="#dadada"/><rect x="322.0" y="491.9" width="3.2" height="1.2" fill="#dadada"/><rect x="318.59999999999997" y="516.9" width="6.6" height="1.2" fill="#dadada"/><rect x="322.0" y="541.9" width="3.2" height="1.2" fill="#dadada"/><rect x="318.59999999999997" y="566.9" width="6.6" height="1.2" fill="#dadada"/><rect x="322.0" y="591.9" width="3.2" height="1.2" fill="#dadada"/><rect x="318.59999999999997" y="616.9" width="6.6" height="1.2" fill="#dadada"/><rect x="322.0" y="641.9" width="3.2" height="1.2" fill="#dadada"/><rect x="318.59999999999997" y="666.9" width="6.6" height="1.2" fill="#dadada"/><rect x="322.0" y="691.9" width="3.2" height="1.2" fill="#dadada"/><rect x="318.59999999999997" y="716.9" width="6.6" height="1.2" fill="#dadada"/><rect x="322.0" y="741.9" width="3.2" height="1.2" fill="#dadada"/><rect x="318.59999999999997" y="766.9" width="6.6" height="1.2" fill="#dadada"/><rect x="304.5" y="700" width="21.5" height="1" fill="#e0e0e0"/><circle cx="683.2" cy="700.1" r="41.7" fill="none" stroke="#348a38" stroke-width="1.25"/><path d="M1907,199.5 h9 l-4.5,-5 z M1907,837 h9 l-4.5,5 z" fill="#a8a8a8"/><path d="M336.2,851.9 v9.5 l-5.2,-4.75 z M1892.8,851.9 v9.5 l5.2,-4.75 z" fill="#a8a8a8"/><rect x="953" y="869" width="1.5" height="1.5" fill="#9a9a9a"/><rect x="956" y="869" width="1.5" height="1.5" fill="#9a9a9a"/><rect x="959" y="869" width="1.5" height="1.5" fill="#9a9a9a"/><rect x="962" y="869" width="1.5" height="1.5" fill="#9a9a9a"/><rect x="965" y="869" width="1.5" height="1.5" fill="#9a9a9a"/><rect x="968" y="869" width="1.5" height="1.5" fill="#9a9a9a"/></svg>
<div class="a" style="left:801px;top:267px;width:512px;height:512px;background:#000;overflow:hidden;"><svg class="a" style="left:0;top:0;filter:blur(0.55px);" width="512" height="512" viewBox="0 0 512 512"><rect x="0" y="0" width="512" height="512" fill="#000" /><path d="M9.5,73.4 H144.6 V63.8 H176 L236,34 V23 H276 V34 L336,63.8 H367.4 V73.4 H502.5" fill="none" stroke="#646464" stroke-width="5.2" stroke-linejoin="miter"/><path d="M236,34 H276" fill="none" stroke="#646464" stroke-width="5.2" /><path d="M9.5,84 H146 M170,71.5 L238,41.2 H274 L342,71.5 M366,84 H502.5" fill="none" stroke="#c8622a" stroke-width="6" /><rect x="9.5" y="76" width="28.5" height="38.6" fill="#c8622a" /><rect x="15.3" y="76" width="6.7" height="4.6" fill="#000" /><rect x="28.5" y="76" width="10.5" height="4.6" fill="#000" /><rect x="15.3" y="88" width="16.1" height="3.3" fill="#000" /><rect x="15.3" y="97" width="6.7" height="5.2" fill="#000" /><rect x="27.7" y="97" width="11.3" height="5.2" fill="#000" /><rect x="15.3" y="108" width="16.1" height="3.2" fill="#000" /><g transform="translate(512,0) scale(-1,1)"><rect x="9.5" y="76" width="28.5" height="38.6" fill="#c8622a" /><rect x="15.3" y="76" width="6.7" height="4.6" fill="#000" /><rect x="28.5" y="76" width="10.5" height="4.6" fill="#000" /><rect x="15.3" y="88" width="16.1" height="3.3" fill="#000" /><rect x="15.3" y="97" width="6.7" height="5.2" fill="#000" /><rect x="27.7" y="97" width="11.3" height="5.2" fill="#000" /><rect x="15.3" y="108" width="16.1" height="3.2" fill="#000" /></g><rect x="143.8" y="76" width="26.2" height="38.6" fill="#c8622a" /><rect x="143.8" y="68.6" width="5.8" height="7.4" fill="#c8622a" /><rect x="164.20000000000002" y="66.4" width="5.8" height="9.6" fill="#c8622a" /><rect x="149.60000000000002" y="76" width="6.6" height="4.6" fill="#000" /><rect x="162.0" y="76" width="5.8" height="4.6" fill="#000" /><rect x="149.60000000000002" y="88" width="13.8" height="3.3" fill="#000" /><rect x="149.60000000000002" y="97" width="6.7" height="5.2" fill="#000" /><rect x="162.0" y="97" width="9.0" height="5.2" fill="#000" /><rect x="149.60000000000002" y="108" width="13.8" height="3.2" fill="#000" /><g transform="translate(512,0) scale(-1,1)"><rect x="143.8" y="76" width="26.2" height="38.6" fill="#c8622a" /><rect x="143.8" y="68.6" width="5.8" height="7.4" fill="#c8622a" /><rect x="164.20000000000002" y="66.4" width="5.8" height="9.6" fill="#c8622a" /><rect x="149.60000000000002" y="76" width="6.6" height="4.6" fill="#000" /><rect x="162.0" y="76" width="5.8" height="4.6" fill="#000" /><rect x="149.60000000000002" y="88" width="13.8" height="3.3" fill="#000" /><rect x="149.60000000000002" y="97" width="6.7" height="5.2" fill="#000" /><rect x="162.0" y="97" width="9.0" height="5.2" fill="#000" /><rect x="149.60000000000002" y="108" width="13.8" height="3.2" fill="#000" /></g><path d="M256,47.5 L245.5,65 L256,91.5 L266.5,65 Z" fill="none" stroke="#646464" stroke-width="4.2" stroke-linejoin="miter"/><rect x="6.6" y="114.6" width="498.8" height="15.4" fill="#646464" rx="2"/><rect x="12" y="120" width="488" height="5" fill="#0a0a0a" /><rect x="7.3" y="130.8" width="497.4" height="5.0" fill="#ffffff" /><path d="M8.5,132.5 L25.5,145" fill="none" stroke="#ffffff" stroke-width="4.6" /><path d="M503.5,132.5 L486.5,145" fill="none" stroke="#ffffff" stroke-width="4.6" /><rect x="22" y="140.6" width="468" height="6.0" fill="#ffffff" /><rect x="27.7" y="146" width="5.9" height="7" fill="#ffffff" /><rect x="478.4" y="146" width="5.9" height="7" fill="#ffffff" /><rect x="12.4" y="152" width="487.2" height="6.8" fill="#ffffff" /><rect x="18.2" y="158" width="6.2" height="145.4" fill="#ffffff" /><rect x="487.8" y="158" width="6.2" height="145.4" fill="#ffffff" /><rect x="27.7" y="166" width="6.6" height="110" fill="#211b2f" /><rect x="477.7" y="166" width="6.6" height="110" fill="#211b2f" /><rect x="67.9" y="166" width="6.5" height="110" fill="#211b2f" /><rect x="437.6" y="166" width="6.5" height="110" fill="#211b2f" /><rect x="151.8" y="166" width="6.6" height="110" fill="#211b2f" /><rect x="353.6" y="166" width="6.6" height="110" fill="#211b2f" /><rect x="194" y="166" width="7.4" height="110" fill="#211b2f" /><rect x="310.6" y="166" width="7.4" height="110" fill="#211b2f" /><rect x="210" y="166" width="7.5" height="110" fill="#211b2f" /><rect x="294.5" y="166" width="7.5" height="110" fill="#211b2f" /><rect x="201.4" y="178" width="8.6" height="84" fill="#000" /><rect x="302.7" y="178" width="9.5" height="84" fill="#000" /><rect x="35" y="167.5" width="32" height="92.0" fill="#ffffff" rx="2"/><rect x="40.8" y="174.0" width="20.4" height="15.2" fill="#5f7482" /><rect x="40.8" y="195" width="20.4" height="58.7" fill="#5f7482" /><rect x="75" y="167.5" width="76" height="92.0" fill="#ffffff" rx="2"/><rect x="80.8" y="174.0" width="64.4" height="15.2" fill="#5f7482" /><rect x="80.8" y="195" width="64.4" height="58.7" fill="#5f7482" /><rect x="158.4" y="167.5" width="35.0" height="92.0" fill="#ffffff" rx="2"/><rect x="164.20000000000002" y="174.0" width="23.4" height="15.2" fill="#5f7482" /><rect x="164.20000000000002" y="195" width="23.4" height="58.7" fill="#5f7482" /><rect x="217.6" y="167.5" width="80.6" height="92.0" fill="#ffffff" rx="2"/><rect x="223.4" y="174.0" width="69.0" height="15.2" fill="#5f7482" /><rect x="223.4" y="195" width="69.0" height="58.7" fill="#5f7482" /><rect x="318" y="167.5" width="37.2" height="92.0" fill="#ffffff" rx="2"/><rect x="323.8" y="174.0" width="25.6" height="15.2" fill="#5f7482" /><rect x="323.8" y="195" width="25.6" height="58.7" fill="#5f7482" /><rect x="363.3" y="167.5" width="74.4" height="92.0" fill="#ffffff" rx="2"/><rect x="369.1" y="174.0" width="62.8" height="15.2" fill="#5f7482" /><rect x="369.1" y="195" width="62.8" height="58.7" fill="#5f7482" /><rect x="444.6" y="167.5" width="36.7" height="92.0" fill="#ffffff" rx="2"/><rect x="450.40000000000003" y="174.0" width="25.1" height="15.2" fill="#5f7482" /><rect x="450.40000000000003" y="195" width="25.1" height="58.7" fill="#5f7482" /><g><clipPath id="c1"><rect x="41" y="174" width="21.799999999999997" height="15.199999999999989"/><rect x="41" y="195" width="21.799999999999997" height="59"/></clipPath><g clip-path="url(#c1)"><path d="M40,192 L64,168" stroke="#a4aeb5" stroke-width="4" opacity="0.85"/><path d="M40,228 L66,196" stroke="#a4aeb5" stroke-width="5" opacity="0.85"/><path d="M40,252 L52,236" stroke="#a4aeb5" stroke-width="5" opacity="0.85"/></g><rect x="44" y="230" width="18.8" height="5" fill="#8b8973" opacity="0.7"/><rect x="52" y="246" width="10.8" height="8" fill="#8b8973" opacity="0.6"/><rect x="82" y="238" width="63" height="5" fill="#8b8973" opacity="0.6"/><rect x="120" y="243" width="15" height="11" fill="#8b8973" opacity="0.6"/><clipPath id="c2"><rect x="80.3" y="174" width="64.89999999999999" height="15.199999999999989"/><rect x="80.3" y="195" width="64.89999999999999" height="59"/></clipPath><g clip-path="url(#c2)"><path d="M120,254 L150,215" stroke="#a4aeb5" stroke-width="5" opacity="0.85"/><path d="M82,252 L112,226" stroke="#a4aeb5" stroke-width="4" opacity="0.85"/></g><clipPath id="c2b"><rect x="80.3" y="174" width="64.9" height="15.2"/><rect x="80.3" y="195" width="64.9" height="59"/></clipPath><g clip-path="url(#c2b)"><circle cx="100.5" cy="197" r="20.5" fill="#dceffb"/><circle cx="127" cy="208" r="12.5" fill="#dceffb"/><circle cx="89" cy="183.5" r="5" fill="#526673"/><circle cx="109.5" cy="184.5" r="5.2" fill="#526673"/><circle cx="100.5" cy="201" r="6.6" fill="#526673"/><circle cx="129" cy="203" r="5" fill="#526673"/><circle cx="121.5" cy="213.5" r="4.6" fill="#526673"/><circle cx="84" cy="201" r="3" fill="#526673"/><circle cx="112" cy="197" r="2.2" fill="#526673"/><circle cx="116" cy="226" r="2.5" fill="#526673"/><circle cx="93.6" cy="219.5" r="9.6" fill="none" stroke="#e9a858" stroke-width="5.2"/><circle cx="93.6" cy="219.5" r="4" fill="#dceffb"/><circle cx="92" cy="220.5" r="2.4" fill="#526673"/><path d="M88,236 C92,246 104,244 108,236" fill="none" stroke="#e9a858" stroke-width="5" opacity="0.9"/><path d="M128.5,224 L110,246" stroke="#8fb7f0" stroke-width="9"/><path d="M114,226 l-6,3 M100,247 l5,7 M108,247 l8,6" stroke="#dceffb" stroke-width="4.5"/><path d="M92,252 L116,228" stroke="#a4aeb5" stroke-width="3.5" opacity="0.8"/></g><clipPath id="c3"><rect x="164" y="174" width="24" height="15.199999999999989"/><rect x="164" y="195" width="24" height="59"/></clipPath><g clip-path="url(#c3)"><path d="M170,186 L186,172" stroke="#a4aeb5" stroke-width="4" opacity="0.85"/><path d="M163,232 L190,196" stroke="#a4aeb5" stroke-width="5" opacity="0.85"/><path d="M166,244 L184,226" stroke="#a4aeb5" stroke-width="5" opacity="0.85"/></g><rect x="172" y="232" width="16" height="6" fill="#8b8973" opacity="0.6"/><rect x="166" y="244" width="14" height="10" fill="#8b8973" opacity="0.5"/><rect x="275.5" y="174" width="6.5" height="15.9" fill="#8b8973" opacity="0.62"/><rect x="275.5" y="195.7" width="6.5" height="20.3" fill="#8b8973" opacity="0.62"/><rect x="222" y="228" width="24" height="5" fill="#8b8973" opacity="0.62"/><rect x="252.5" y="212" width="5.5" height="41.8" fill="#8b8973" opacity="0.62"/><rect x="222" y="243" width="14" height="10.8" fill="#8b8973" opacity="0.5"/><rect x="238" y="238" width="14" height="5" fill="#8b8973" opacity="0.5"/><rect x="258" y="228" width="34" height="5" fill="#8b8973" opacity="0.62"/><rect x="268" y="233" width="5.5" height="20.8" fill="#8b8973" opacity="0.62"/><rect x="281" y="240" width="11" height="5" fill="#8b8973" opacity="0.55"/><rect x="286" y="245" width="6" height="8.8" fill="#8b8973" opacity="0.5"/><rect x="262" y="196" width="6" height="16" fill="#8b8973" opacity="0.4"/><rect x="284.5" y="176" width="7.5" height="13.9" fill="#b9d6ea" opacity="0.75"/><rect x="285" y="203" width="7" height="8" fill="#b9d6ea" opacity="0.7"/><rect x="284" y="221" width="6" height="5" fill="#9cc0dc" opacity="0.8"/><clipPath id="c4"><rect x="222.6" y="174" width="69.9" height="15.199999999999989"/><rect x="222.6" y="195" width="69.9" height="59"/></clipPath><g clip-path="url(#c4)"><path d="M237,192 L263,172" stroke="#a4aeb5" stroke-width="5" opacity="0.85"/><path d="M236,223 L270,195" stroke="#a4aeb5" stroke-width="5.4" opacity="0.85"/><path d="M255,237 L293,197" stroke="#a4aeb5" stroke-width="5.4" opacity="0.85"/><path d="M280,190 L292,178" stroke="#a4aeb5" stroke-width="4" opacity="0.85"/></g><path d="M239,247 l8,-5" stroke="#a4aeb5" stroke-width="5" stroke-linecap="round"/><rect x="324" y="196" width="25.4" height="6.5" fill="#8b8973" opacity="0.75"/><rect x="324" y="212.8" width="25.4" height="5.2" fill="#8b8973" opacity="0.75"/><rect x="324" y="226" width="25.4" height="6" fill="#8b8973" opacity="0.75"/><rect x="330" y="238" width="19.4" height="5" fill="#8b8973" opacity="0.6"/><rect x="327" y="177" width="19" height="11" fill="#8db3cf" opacity="0.7"/><rect x="328" y="203" width="5" height="9.8" fill="#8db3cf" /><rect x="336" y="203" width="5" height="9.8" fill="#8db3cf" /><rect x="329" y="219" width="5" height="7" fill="#8db3cf" /><rect x="338" y="219" width="5" height="7" fill="#8db3cf" /><clipPath id="c5"><rect x="323.9" y="174" width="25.5" height="15.199999999999989"/><rect x="323.9" y="195" width="25.5" height="59"/></clipPath><g clip-path="url(#c5)"><path d="M324,254 L352,222" stroke="#a4aeb5" stroke-width="5" opacity="0.85"/><path d="M335,188 L346,176" stroke="#a4aeb5" stroke-width="3" opacity="0.85"/></g><rect x="368.4" y="196" width="63.5" height="6.5" fill="#8b8973" opacity="0.75"/><rect x="368.4" y="212.8" width="63.5" height="5.7" fill="#8b8973" opacity="0.75"/><rect x="368.4" y="226" width="63.5" height="6" fill="#8b8973" opacity="0.75"/><rect x="386" y="240" width="24" height="5" fill="#8b8973" opacity="0.6"/><rect x="394" y="245" width="6" height="9" fill="#8b8973" opacity="0.6"/><rect x="370" y="178" width="61" height="10" fill="#8db3cf" opacity="0.75"/><rect x="369" y="203" width="12" height="9.8" fill="#8db3cf" /><rect x="389" y="203" width="23" height="9.8" fill="#8db3cf" /><rect x="416" y="205" width="12" height="7.8" fill="#8db3cf" /><rect x="370" y="220" width="12" height="6" fill="#8db3cf" /><rect x="391" y="219" width="14" height="7" fill="#8db3cf" /><rect x="410" y="221" width="12" height="5" fill="#8db3cf" /><clipPath id="c6"><rect x="368.4" y="174" width="63.5" height="15.199999999999989"/><rect x="368.4" y="195" width="63.5" height="59"/></clipPath><g clip-path="url(#c6)"><path d="M370,254 L410,212" stroke="#a4aeb5" stroke-width="6" opacity="0.85"/><path d="M406,246 L436,212" stroke="#a4aeb5" stroke-width="5" opacity="0.85"/><path d="M392,190 L408,174" stroke="#a4aeb5" stroke-width="4" opacity="0.85"/><path d="M412,190 L424,178" stroke="#a4aeb5" stroke-width="3" opacity="0.85"/></g><clipPath id="c7"><rect x="450.1" y="174" width="24.099999999999966" height="15.199999999999989"/><rect x="450.1" y="195" width="24.099999999999966" height="59"/></clipPath><g clip-path="url(#c7)"><path d="M448,230 L478,194" stroke="#a4aeb5" stroke-width="5" opacity="0.85"/><path d="M452,252 L472,230" stroke="#a4aeb5" stroke-width="5" opacity="0.85"/><path d="M466,188 L476,178" stroke="#a4aeb5" stroke-width="3" opacity="0.85"/></g><circle cx="460.5" cy="182" r="2.5" fill="#a4aeb5"/><rect x="450.1" y="174" width="5.9" height="14" fill="#8b8973" opacity="0.5"/><rect x="462" y="240" width="12.2" height="14" fill="#8b8973" opacity="0.5"/></g><circle cx="205.6" cy="172.8" r="10.2" fill="#000" stroke="#f5ab27" stroke-width="5.8"/><circle cx="307.6" cy="173.2" r="10.2" fill="#000" stroke="#f5ab27" stroke-width="5.8"/><rect x="23.4" y="262.6" width="465.2" height="6.4" fill="#ffffff" /><rect x="10.2" y="282.2" width="491.6" height="17.5" fill="#ffffff" rx="3"/><rect x="16" y="288.6" width="480" height="5.0" fill="#000" /><rect x="5.8" y="304" width="500.4" height="19.2" fill="#211b2f" rx="2"/><rect x="12" y="310.6" width="488" height="6.4" fill="#000" /><rect x="22.6" y="321" width="466.8" height="66.4" fill="#211b2f" /><rect x="28.4" y="323.5" width="455.2" height="57.9" fill="#000" /><rect x="8" y="323.2" width="14.6" height="64.8" fill="#c8622a" /><rect x="14" y="324.5" width="8.6" height="4.6" fill="#000" /><rect x="14" y="334.5" width="8.6" height="5.0" fill="#000" /><rect x="14" y="346" width="8.6" height="6" fill="#000" /><rect x="14" y="358.4" width="8.6" height="6.0" fill="#000" /><rect x="14" y="371.3" width="8.6" height="6.5" fill="#000" /><rect x="489.4" y="323.2" width="13.2" height="64.8" fill="#c8622a" /><rect x="489.4" y="324.5" width="7.2" height="4.6" fill="#000" /><rect x="489.4" y="334.5" width="7.2" height="5.0" fill="#000" /><rect x="489.4" y="346" width="7.2" height="6" fill="#000" /><rect x="489.4" y="358.4" width="7.2" height="6.0" fill="#000" /><rect x="489.4" y="371.3" width="7.2" height="6.5" fill="#000" /><path d="M89,334.5 C83,340 83,348 88,352 C92,356 92,360 89,364" fill="none" stroke="#f5ab27" stroke-width="6" stroke-linecap="round" stroke-linejoin="round"/><circle cx="83.4" cy="366" r="8.8" fill="none" stroke="#f5ab27" stroke-width="2" opacity="0.8"/><circle cx="83.4" cy="366" r="6.6" fill="#000" stroke="#1e9e80" stroke-width="5"/><circle cx="105" cy="343.5" r="8" fill="none" stroke="#f5ab27" stroke-width="5.4"/><path d="M124.5,333 L125.5,338" fill="none" stroke="#f5ab27" stroke-width="4.6" stroke-linecap="round" stroke-linejoin="round"/><path d="M134,335 C142,335 146,342 144,350 C142,358 132,359 125,355" fill="none" stroke="#f5ab27" stroke-width="6" stroke-linecap="round" stroke-linejoin="round"/><path d="M177,332.5 C192,334 204,342 210,352" fill="none" stroke="#f5ab27" stroke-width="6" stroke-linecap="round" stroke-linejoin="round"/><path d="M180,345 V355" fill="none" stroke="#f5ab27" stroke-width="5.5" stroke-linecap="round" stroke-linejoin="round"/><circle cx="188" cy="351" r="2.6" fill="#f5ab27"/><path d="M197,360 C196,372 210,374 214,366" fill="none" stroke="#f5ab27" stroke-width="6" stroke-linecap="round" stroke-linejoin="round"/><circle cx="206.5" cy="358.8" r="6.4" fill="#000" stroke="#1e9e80" stroke-width="5"/><path d="M220,342 C232,338 244,346 243,358 C242,370 230,374 226,366 C224,360 230,356 234,360" fill="none" stroke="#f5ab27" stroke-width="6" stroke-linecap="round" stroke-linejoin="round"/><path d="M249,339 L259,350 L268,339 M259,350 L254,372" fill="none" stroke="#f5ab27" stroke-width="6" stroke-linecap="round" stroke-linejoin="round"/><path d="M262,366 L292,341 M275,354 C282,356 286,362 288,370" fill="none" stroke="#f5ab27" stroke-width="6" stroke-linecap="round" stroke-linejoin="round"/><circle cx="274" cy="369.5" r="2.4" fill="#f5ab27"/><circle cx="283.5" cy="365.5" r="2.4" fill="#f5ab27"/><circle cx="267" cy="371.5" r="2" fill="#f5ab27"/><path d="M318,352 C312,346 300,348 298,358 C297,368 310,372 318,366 C322,360 316,356 310,359" fill="none" stroke="#f5ab27" stroke-width="6" stroke-linecap="round" stroke-linejoin="round"/><circle cx="302.7" cy="343.5" r="2.6" fill="#f5ab27"/><circle cx="314.4" cy="343" r="2.6" fill="#f5ab27"/><path d="M325,350 C340,334 366,330 388,333 C406,336 420,344 426,352" fill="none" stroke="#f5ab27" stroke-width="6" stroke-linecap="round" stroke-linejoin="round"/><path d="M333,355 C346,344 364,341 378,345 C392,350 390,362 378,366" fill="none" stroke="#f5ab27" stroke-width="6" stroke-linecap="round" stroke-linejoin="round"/><path d="M390,367 H425" fill="none" stroke="#f5ab27" stroke-width="6" stroke-linecap="round" stroke-linejoin="round"/><circle cx="339" cy="365.5" r="8" fill="#f5ab27"/><path d="M344,360 L354,366 L344,371 Z" fill="#f5ab27"/><circle cx="338" cy="363" r="3.5" fill="#fbcf7a"/><circle cx="367.7" cy="361.3" r="6" fill="#000" stroke="#1e9e80" stroke-width="5"/><circle cx="367.7" cy="361.3" r="2" fill="#6a3d0c"/><path d="M86,346 C87,350 90,352 91,356" fill="none" stroke="#fbcf7a" stroke-width="3.2" stroke-linecap="round" opacity="0.85"/><path d="M144,344 C145,350 142,355 137,357" fill="none" stroke="#fbcf7a" stroke-width="3.2" stroke-linecap="round" opacity="0.85"/><path d="M190,336 C198,340 204,345 208,350" fill="none" stroke="#fbcf7a" stroke-width="3.2" stroke-linecap="round" opacity="0.85"/><path d="M236,344 C242,350 243,358 240,364" fill="none" stroke="#fbcf7a" stroke-width="3.2" stroke-linecap="round" opacity="0.85"/><path d="M232,368 C229,369 227,367 226,365" fill="none" stroke="#fbcf7a" stroke-width="2.6" stroke-linecap="round" opacity="0.85"/><path d="M252,343 L258,349" fill="none" stroke="#fbcf7a" stroke-width="3.2" stroke-linecap="round" opacity="0.85"/><path d="M276,355 C282,357 285,362 287,368" fill="none" stroke="#fbcf7a" stroke-width="3.2" stroke-linecap="round" opacity="0.85"/><path d="M300,356 C300,364 308,369 315,366" fill="none" stroke="#fbcf7a" stroke-width="3.2" stroke-linecap="round" opacity="0.85"/><path d="M360,333 C372,331 384,332 394,335" fill="none" stroke="#fbcf7a" stroke-width="3.2" stroke-linecap="round" opacity="0.85"/><path d="M352,346 C362,343 372,343 380,346" fill="none" stroke="#fbcf7a" stroke-width="3.2" stroke-linecap="round" opacity="0.85"/><path d="M398,367 H418" fill="none" stroke="#fbcf7a" stroke-width="3" stroke-linecap="round" opacity="0.85"/><rect x="8" y="387" width="40.9" height="125" fill="#c8622a" /><rect x="13.9" y="397.8" width="12.4" height="5.9" fill="#000" /><rect x="32.1" y="397.8" width="11.7" height="5.9" fill="#000" /><rect x="13.9" y="410.2" width="29.9" height="6.6" fill="#000" /><rect x="13.9" y="423.4" width="12.4" height="6.6" fill="#000" /><rect x="32.1" y="423.4" width="11.7" height="6.6" fill="#000" /><rect x="13.9" y="437.2" width="29.9" height="7.3" fill="#000" /><rect x="13.9" y="451.8" width="12.4" height="6.6" fill="#000" /><rect x="32.1" y="451.8" width="11.7" height="6.6" fill="#000" /><rect x="13.9" y="465" width="29.9" height="7.2" fill="#000" /><rect x="13.9" y="479.5" width="12.4" height="6.5" fill="#000" /><rect x="32.1" y="479.5" width="11.7" height="6.5" fill="#000" /><rect x="13.9" y="493.4" width="29.9" height="5.8" fill="#000" /><rect x="13.9" y="506.5" width="12.4" height="5.5" fill="#000" /><rect x="32.1" y="506.5" width="11.7" height="5.5" fill="#000" /><rect x="461.8" y="387" width="40.6" height="125" fill="#c8622a" /><rect x="468.3" y="387.6" width="27.0" height="5.1" fill="#000" /><rect x="468.3" y="400" width="11.0" height="7.3" fill="#000" /><rect x="485.9" y="400" width="9.4" height="7.3" fill="#000" /><rect x="468.3" y="414.6" width="27.0" height="6.6" fill="#000" /><rect x="468.3" y="427.7" width="11.0" height="6.6" fill="#000" /><rect x="485.9" y="427.7" width="9.4" height="6.6" fill="#000" /><rect x="468.3" y="441.6" width="27.0" height="4.4" fill="#000" /><rect x="468.3" y="452.5" width="11.0" height="6.5" fill="#000" /><rect x="485.9" y="452.5" width="9.4" height="6.5" fill="#000" /><rect x="468.3" y="466.4" width="27.0" height="5.8" fill="#000" /><rect x="468.3" y="480.3" width="11.0" height="5.7" fill="#000" /><rect x="485.9" y="480.3" width="9.4" height="5.7" fill="#000" /><rect x="468.3" y="493.4" width="27.0" height="5.1" fill="#000" /><rect x="468.3" y="505.8" width="11.0" height="6.2" fill="#000" /><rect x="485.9" y="505.8" width="9.4" height="6.2" fill="#000" /><rect x="13.9" y="388" width="29.1" height="4.4" fill="#000" /><rect x="59.8" y="392" width="95.6" height="68" fill="#187a48" rx="2"/><rect x="65.6" y="398.4" width="84.4" height="59.6" fill="#5f7482" /><clipPath id="g1"><rect x="65.6" y="398.4" width="84.4" height="59"/></clipPath><g clip-path="url(#g1)"><rect x="66.4" y="418.2" width="13.9" height="5.2" fill="#8b8973" /><rect x="66.4" y="435.8" width="13.6" height="5.8" fill="#8b8973" /><rect x="66.4" y="448.2" width="43.6" height="5.8" fill="#8b8973" /><rect x="66.5" y="400" width="10.5" height="16" fill="#9bbad2" /><rect x="68" y="425" width="5" height="10" fill="#9bbad2" /><rect x="68" y="443" width="5" height="5" fill="#9bbad2" /><path d="M80,436 L114,402" stroke="#a4aeb5" stroke-width="4"/><path d="M88,456 L112,432" stroke="#a4aeb5" stroke-width="4"/><path d="M95.5,401 L103,416 L110,426 C110,438 100,442 93,440 C86,436 86,428 90,421 Z" fill="#e6f3fc"/><circle cx="98" cy="428.5" r="4.2" fill="#5a6c78"/><path d="M91,438 L106,435 L109,446 L92,449 Z" fill="#d0606e"/><path d="M98,452 L110,438" stroke="#e8d0d0" stroke-width="3"/><rect x="142.3" y="398" width="8.0" height="60" fill="#5f7482" /></g><rect x="199.2" y="392" width="94.8" height="68" fill="#187a48" rx="2"/><rect x="205.0" y="398.4" width="83.6" height="59.6" fill="#5f7482" /><clipPath id="g2"><rect x="205.0" y="398.4" width="83.60000000000001" height="59"/></clipPath><g clip-path="url(#g2)"><path d="M206,438 L244,398" stroke="#a4aeb5" stroke-width="4"/><path d="M212,456 L240,428" stroke="#a4aeb5" stroke-width="4"/><path d="M238,406 L228,412 L216,424 C212,434 216,442 224,444 C232,442 236,430 236,420 Z" fill="#e6f3fc"/><path d="M222,422 q4,-2 5,3 q-1,6 -4,6" fill="none" stroke="#9ab" stroke-width="1.6"/><path d="M214,434 L222,432 L228,446 L236,442 L236,458 L210,458 Z" fill="#6d97d2"/><path d="M224,458 L238,440" stroke="#c8d8f0" stroke-width="3"/><path d="M272,424 L290,402" stroke="#a4aeb5" stroke-width="4"/><rect x="206" y="426" width="6" height="32" fill="#8b8973" opacity="0.5"/></g><rect x="160.5" y="387.4" width="5.1" height="70.6" fill="#187a48" /><rect x="188.3" y="387.4" width="5.8" height="70.6" fill="#187a48" /><rect x="300.5" y="387.4" width="5.1" height="82.6" fill="#187a48" /><rect x="330.4" y="387.4" width="5.9" height="124.6" fill="#187a48" /><circle cx="177.3" cy="403.6" r="11" fill="#000" stroke="#f5ab27" stroke-width="5.8"/><rect x="113.8" y="386.9" width="28.5" height="61.5" fill="#ffffff" /><rect x="119.7" y="386" width="16.8" height="57" fill="#000" /><rect x="240.8" y="386.9" width="28.5" height="61.5" fill="#ffffff" /><rect x="246.70000000000002" y="386" width="16.8" height="57" fill="#000" /><rect x="53.3" y="446" width="5.4" height="66" fill="#6a3d0c" /><rect x="156.2" y="446" width="5.4" height="66" fill="#6a3d0c" /><rect x="181.7" y="446" width="5.4" height="66" fill="#6a3d0c" /><rect x="297" y="446" width="5.4" height="66" fill="#6a3d0c" /><rect x="50.4" y="483" width="273.5" height="29" fill="#000" /><rect x="57" y="486" width="5" height="26" fill="#6a3d0c" /><rect x="156" y="486" width="5" height="26" fill="#6a3d0c" /><rect x="167" y="486" width="5" height="26" fill="#6a3d0c" /><rect x="189" y="486" width="5" height="26" fill="#6a3d0c" /><rect x="211" y="486" width="5" height="26" fill="#6a3d0c" /><rect x="222" y="486" width="5" height="26" fill="#6a3d0c" /><rect x="233" y="486" width="5" height="26" fill="#6a3d0c" /><rect x="288" y="486" width="5" height="26" fill="#6a3d0c" /><rect x="299" y="486" width="5" height="26" fill="#6a3d0c" /><rect x="310" y="486" width="5" height="26" fill="#6a3d0c" /><rect x="321" y="486" width="5" height="26" fill="#6a3d0c" /><rect x="50.4" y="456.2" width="273.5" height="5.8" fill="#6a6a6a" /><rect x="50.4" y="462" width="273.5" height="15.6" fill="#6a6a6a" opacity="0.93"/><rect x="50.4" y="477.6" width="273.5" height="5.8" fill="#6a6a6a" /><path d="M64,472 a6,5 0 1 1 10,2 M70,470 a2,2 0 1 1 -2,3" fill="none" stroke="#3b332c" stroke-width="2.2" opacity="0.8"/><path d="M86,472 a6,5 0 1 1 10,2 M92,470 a2,2 0 1 1 -2,3" fill="none" stroke="#3b332c" stroke-width="2.2" opacity="0.8"/><path d="M154,472 a6,5 0 1 1 10,2 M160,470 a2,2 0 1 1 -2,3" fill="none" stroke="#3b332c" stroke-width="2.2" opacity="0.8"/><path d="M172,472 a6,5 0 1 1 10,2 M178,470 a2,2 0 1 1 -2,3" fill="none" stroke="#3b332c" stroke-width="2.2" opacity="0.8"/><path d="M194,472 a6,5 0 1 1 10,2 M200,470 a2,2 0 1 1 -2,3" fill="none" stroke="#3b332c" stroke-width="2.2" opacity="0.8"/><path d="M216,472 a6,5 0 1 1 10,2 M222,470 a2,2 0 1 1 -2,3" fill="none" stroke="#3b332c" stroke-width="2.2" opacity="0.8"/><path d="M294,472 a6,5 0 1 1 10,2 M300,470 a2,2 0 1 1 -2,3" fill="none" stroke="#3b332c" stroke-width="2.2" opacity="0.8"/><rect x="58" y="463" width="4" height="14" fill="#6a3d0c" opacity="0.7"/><rect x="84" y="463" width="4" height="14" fill="#6a3d0c" opacity="0.7"/><rect x="152" y="463" width="4" height="14" fill="#6a3d0c" opacity="0.7"/><rect x="190" y="463" width="4" height="14" fill="#6a3d0c" opacity="0.7"/><rect x="212" y="463" width="4" height="14" fill="#6a3d0c" opacity="0.7"/><path d="M66,474 l12,-5 M224,474 l14,-4" stroke="#dfe5ea" stroke-width="3"/><path d="M294,478 c-6,-12 8,-18 12,-9 c3,7 -7,9 -8,3" fill="none" stroke="#0a0a0a" stroke-width="3"/><path d="M168,466 c-4,8 4,12 8,8 c2,-4 -2,-6 -4,-4" fill="none" stroke="#111" stroke-width="2.6"/><rect x="51.6" y="483" width="5.9" height="29" fill="#6a6a6a" /><rect x="62.0" y="483" width="5.9" height="29" fill="#6a6a6a" /><rect x="72.4" y="483" width="5.9" height="29" fill="#6a6a6a" /><rect x="82.80000000000001" y="483" width="5.9" height="29" fill="#6a6a6a" /><rect x="93.20000000000002" y="483" width="5.9" height="29" fill="#6a6a6a" /><rect x="155.60000000000005" y="483" width="5.9" height="29" fill="#6a6a6a" /><rect x="166.00000000000006" y="483" width="5.9" height="29" fill="#6a6a6a" /><rect x="176.40000000000006" y="483" width="5.9" height="29" fill="#6a6a6a" /><rect x="186.80000000000007" y="483" width="5.9" height="29" fill="#6a6a6a" /><rect x="197.20000000000007" y="483" width="5.9" height="29" fill="#6a6a6a" /><rect x="207.60000000000008" y="483" width="5.9" height="29" fill="#6a6a6a" /><rect x="218.00000000000009" y="483" width="5.9" height="29" fill="#6a6a6a" /><rect x="228.4000000000001" y="483" width="5.9" height="29" fill="#6a6a6a" /><rect x="280.40000000000003" y="483" width="5.9" height="29" fill="#6a6a6a" /><rect x="290.8" y="483" width="5.9" height="29" fill="#6a6a6a" /><rect x="301.2" y="483" width="5.9" height="29" fill="#6a6a6a" /><rect x="311.59999999999997" y="483" width="5.9" height="29" fill="#6a6a6a" /><rect x="321.99999999999994" y="483" width="5.9" height="29" fill="#6a6a6a" /><rect x="110" y="448.4" width="37.6" height="5.8" fill="#1e9e80" /><rect x="114" y="454" width="28.1" height="45" fill="#1e9e80" /><rect x="120.2" y="454.2" width="17.2" height="44.4" fill="#000" /><rect x="107.8" y="498.6" width="42.2" height="13.4" fill="#1e9e80" /><rect x="113.6" y="504.2" width="30.6" height="7.8" fill="#000" /><rect x="236.7" y="448.4" width="40.8" height="5.8" fill="#1e9e80" /><rect x="243.7" y="454" width="29.7" height="45" fill="#1e9e80" /><rect x="249.2" y="454.2" width="18.0" height="44.4" fill="#000" /><rect x="236.7" y="498.6" width="42.3" height="13.4" fill="#1e9e80" /><rect x="243" y="504.2" width="29.8" height="7.8" fill="#000" /><ellipse cx="320.6" cy="400.6" rx="9" ry="20.4" fill="#000" stroke="#ffffff" stroke-width="6.4" transform="rotate(6 320.5 400.5)"/><path d="M313,380 l-3,10" stroke="#f5ab27" stroke-width="2"/><circle cx="319.3" cy="436.8" r="10.6" fill="#000" stroke="#ffffff" stroke-width="5.2"/><path d="M296,455 L308,445.5 L322,452 L334,466 L331,478" fill="none" stroke="#b9bdb0" stroke-width="4.6" stroke-linejoin="round"/><path d="M300,455 L309,449 L316,453" fill="none" stroke="#000" stroke-width="3" /><rect x="337" y="392.7" width="27" height="43.1" fill="#f5ead0" rx="1.5"/><rect x="343.6" y="399.3" width="13.2" height="30.7" fill="#000" /><path d="M340,395.5 L348,397.5 L352,402 L356,397.5 L358,395.5 L357,403 L351,407.5 L346,405 Z" fill="#1e9e80"/><rect x="347" y="414.5" width="5" height="4.0" fill="#c01818" /><rect x="353.5" y="414.5" width="6.0" height="4.0" fill="#c01818" /><rect x="337.5" y="443" width="26.5" height="37.3" fill="#f5ead0" rx="1.5"/><rect x="343.6" y="451" width="9.4" height="23" fill="#000" /><path d="M342,447 L348,449 L351,455 L353,448 L359.6,446 V472 L354,474 L352,458 L347,456 Z" fill="#1e9e80"/><rect x="366.2" y="387.4" width="5.8" height="124.6" fill="#5a3408" /><rect x="444.3" y="387.4" width="6.5" height="124.6" fill="#5a3408" /><rect x="398.3" y="387.4" width="39.4" height="50.6" fill="#5a3408" /><rect x="404.1" y="387.4" width="27.8" height="44.7" fill="#5f7482" /><clipPath id="cd"><rect x="404.1" y="387.4" width="27.799999999999955" height="44.700000000000045"/></clipPath><g clip-path="url(#cd)"><path d="M410,408 L434,384" stroke="#a4aeb5" stroke-width="5" opacity="0.85"/><path d="M404,432 L434,402" stroke="#a4aeb5" stroke-width="5" opacity="0.85"/></g><circle cx="406.5" cy="408" r="2.2" fill="#a4aeb5"/><rect x="418" y="449.6" width="18" height="6.6" fill="#b4b4b4" /><rect x="418" y="456" width="5.6" height="5.5" fill="#9a9a9a" /><path d="M427,447 H436.3 V462" fill="none" stroke="#f5ab27" stroke-width="5.6" /><circle cx="278.6" cy="468" r="5.6" fill="#f4f4ee"/><ellipse cx="336.5" cy="474" rx="4.6" ry="7" fill="#f4fbfb"/><circle cx="294" cy="499.5" r="3.2" fill="#fff"/><ellipse cx="305.6" cy="505" rx="3.6" ry="6" fill="#f4fbfb"/><circle cx="283.7" cy="506" r="3.2" fill="#fff"/><circle cx="282" cy="489" r="3" fill="#b9bdb0"/><circle cx="293" cy="494" r="2.6" fill="#b9bdb0"/><circle cx="306" cy="496" r="2.4" fill="#b9bdb0"/><circle cx="314" cy="496" r="2.2" fill="#b9bdb0"/></svg></div>
<span class="t" style="left:11.0px;top:882.3px;font-size:14px;line-height:14px;letter-spacing:-0.092px;color:#d6d6d6;">Animation Timeline</span>
<div class="a field" style="left:356px;top:876px;width:79px;height:25px;"></div>
<div class="a " style="left:419px;top:876px;width:16px;height:25px;background:#4a4a4a;border:1px solid #5c5c5c;border-left:1px solid #3a3a3a;border-radius:0 3px 3px 0;"></div>
<span class="t" style="left:359.3px;top:882.1px;font-size:13.5px;line-height:13.5px;letter-spacing:0.162px;color:#d6d6d6;">#  3</span>
<div class="a " style="left:453px;top:873.6px;width:28px;height:27.4px;background:#3c3c3c;border:1px solid #5c5c5c;border-radius:3.5px;box-shadow:0 0 0 1px #3b3b3b;"></div>
<div class="a field" style="left:483px;top:875.7px;width:113px;height:24.6px;"></div>
<div class="a " style="left:483px;top:875.7px;width:41.2px;height:24.6px;background:#53728e;border-radius:3px 0 0 3px;"></div>
<div class="a " style="left:580px;top:875.7px;width:16px;height:24.6px;background:#4a4a4a;border:1px solid #5c5c5c;border-left:1px solid #3a3a3a;border-radius:0 3px 3px 0;"></div>
<span class="t" style="left:489.5px;top:882.3px;font-size:13.5px;line-height:13.5px;letter-spacing:-0.256px;color:#e4e4e4;">Speed: 100 %</span>
<div class="a " style="left:1px;top:904.6px;width:236.5px;height:27.8px;background:#3a3a3a;border-top:1px solid #555555;"></div>
<div class="a " style="left:238px;top:905px;width:1665px;height:21px;background:#333333;"></div>
<div class="a " style="left:238px;top:926px;width:1665px;height:7px;background:#3a3a3a;"></div>
<div class="a " style="left:238px;top:933px;width:1665px;height:44px;background:#373a3c;"></div>
<span class="t" style="left:239.3px;top:908.8px;font-size:13px;line-height:13px;letter-spacing:0.000px;color:#d6d6d6;">0</span>
<span class="t" style="left:299.3px;top:908.8px;font-size:13px;line-height:13px;letter-spacing:0.000px;color:#d6d6d6;">3</span>
<span class="t" style="left:359.3px;top:908.8px;font-size:13px;line-height:13px;letter-spacing:0.000px;color:#d6d6d6;">6</span>
<span class="t" style="left:419.3px;top:908.8px;font-size:13px;line-height:13px;letter-spacing:0.000px;color:#d6d6d6;">9</span>
<span class="t" style="left:479.3px;top:908.8px;font-size:13px;line-height:13px;letter-spacing:0.000px;color:#d6d6d6;">12</span>
<span class="t" style="left:539.3px;top:908.8px;font-size:13px;line-height:13px;letter-spacing:0.000px;color:#d6d6d6;">15</span>
<span class="t" style="left:599.3px;top:908.8px;font-size:13px;line-height:13px;letter-spacing:0.000px;color:#d6d6d6;">18</span>
<span class="t" style="left:659.3px;top:908.8px;font-size:13px;line-height:13px;letter-spacing:0.000px;color:#d6d6d6;">21</span>
<span class="t" style="left:719.3px;top:908.8px;font-size:13px;line-height:13px;letter-spacing:0.000px;color:#d6d6d6;">24</span>
<span class="t" style="left:779.3px;top:908.8px;font-size:13px;line-height:13px;letter-spacing:0.000px;color:#d6d6d6;">27</span>
<span class="t" style="left:839.3px;top:908.8px;font-size:13px;line-height:13px;letter-spacing:0.000px;color:#d6d6d6;">30</span>
<span class="t" style="left:899.3px;top:908.8px;font-size:13px;line-height:13px;letter-spacing:0.000px;color:#d6d6d6;">33</span>
<span class="t" style="left:959.3px;top:908.8px;font-size:13px;line-height:13px;letter-spacing:0.000px;color:#d6d6d6;">36</span>
<span class="t" style="left:1019.3px;top:908.8px;font-size:13px;line-height:13px;letter-spacing:0.000px;color:#d6d6d6;">39</span>
<span class="t" style="left:1079.3px;top:908.8px;font-size:13px;line-height:13px;letter-spacing:0.000px;color:#d6d6d6;">42</span>
<span class="t" style="left:1139.3px;top:908.8px;font-size:13px;line-height:13px;letter-spacing:0.000px;color:#d6d6d6;">45</span>
<span class="t" style="left:1199.3px;top:908.8px;font-size:13px;line-height:13px;letter-spacing:0.000px;color:#d6d6d6;">48</span>
<span class="t" style="left:1259.3px;top:908.8px;font-size:13px;line-height:13px;letter-spacing:0.000px;color:#d6d6d6;">51</span>
<span class="t" style="left:1319.3px;top:908.8px;font-size:13px;line-height:13px;letter-spacing:0.000px;color:#d6d6d6;">54</span>
<span class="t" style="left:1379.3px;top:908.8px;font-size:13px;line-height:13px;letter-spacing:0.000px;color:#d6d6d6;">57</span>
<span class="t" style="left:1439.3px;top:908.8px;font-size:13px;line-height:13px;letter-spacing:0.000px;color:#d6d6d6;">60</span>
<span class="t" style="left:1499.3px;top:908.8px;font-size:13px;line-height:13px;letter-spacing:0.000px;color:#d6d6d6;">63</span>
<span class="t" style="left:1559.3px;top:908.8px;font-size:13px;line-height:13px;letter-spacing:0.000px;color:#d6d6d6;">66</span>
<span class="t" style="left:1619.3px;top:908.8px;font-size:13px;line-height:13px;letter-spacing:0.000px;color:#d6d6d6;">69</span>
<span class="t" style="left:1679.3px;top:908.8px;font-size:13px;line-height:13px;letter-spacing:0.000px;color:#d6d6d6;">72</span>
<span class="t" style="left:1739.3px;top:908.8px;font-size:13px;line-height:13px;letter-spacing:0.000px;color:#d6d6d6;">75</span>
<span class="t" style="left:1799.3px;top:908.8px;font-size:13px;line-height:13px;letter-spacing:0.000px;color:#d6d6d6;">78</span>
<span class="t" style="left:1859.3px;top:908.8px;font-size:13px;line-height:13px;letter-spacing:0.000px;color:#d6d6d6;">81</span>
<div class="a " style="left:0px;top:932.3px;width:237.5px;height:20.2px;background:#363636;"></div>
<div class="a " style="left:0px;top:952.5px;width:237.5px;height:2.3px;background:#4d76a3;"></div>
<span class="t" style="left:21.0px;top:935.2px;font-size:13.6px;line-height:13.6px;letter-spacing:0.006px;color:#e4e4e4;">Ani Static</span>
<span class="t" style="left:203.2px;top:930.7px;font-size:18.8px;line-height:18.8px;letter-spacing:0.000px;color:#7a7a7a;font-style:italic;font-family:"Liberation Serif",serif;transform:scaleX(1.22);transform-origin:0 0;">α</span>
<div class="a " style="left:0px;top:954.8px;width:237.5px;height:19px;background:#363636;"></div>
<div class="a " style="left:0px;top:973.8px;width:237.5px;height:2.3px;background:#4d76a3;"></div>
<span class="t" style="left:21.0px;top:959.3px;font-size:13.6px;line-height:13.6px;letter-spacing:-0.287px;color:#e4e4e4;">Ani Glass</span>
<span class="t" style="left:203.2px;top:954.1px;font-size:18.8px;line-height:18.8px;letter-spacing:0.000px;color:#7a7a7a;font-style:italic;font-family:"Liberation Serif",serif;transform:scaleX(1.22);transform-origin:0 0;">α</span>
<div class="a " style="left:1903px;top:905px;width:17px;height:72px;background:#3d3d3d;"></div>
<div class="a " style="left:1903px;top:906px;width:17px;height:15px;background:#484848;border:1px solid #585858;"></div>
<div class="a " style="left:1903px;top:922px;width:17px;height:33px;background:linear-gradient(90deg,#474747,#3f3f3f);border:1px solid #5a5a5a;"></div>
<div class="a " style="left:1903px;top:961px;width:17px;height:15px;background:#484848;border:1px solid #585858;"></div>
<div class="a " style="left:0px;top:978px;width:1903px;height:16px;background:#3d3d3d;"></div>
<div class="a " style="left:0px;top:978px;width:17px;height:16px;background:#484848;border:1px solid #585858;"></div>
<div class="a " style="left:18px;top:978px;width:1746px;height:16px;background:linear-gradient(#474747,#3f3f3f);border:1px solid #5a5a5a;"></div>
<div class="a " style="left:1887px;top:978px;width:16px;height:16px;background:#484848;border:1px solid #585858;"></div>
<span class="t" style="left:37.3px;top:1007.4px;font-size:14px;line-height:14px;letter-spacing:0.220px;color:#d6d6d6;">b) Basic-1</span>
<span class="t" style="left:472.3px;top:1007.1px;font-size:14px;line-height:14px;letter-spacing:0.427px;color:#d6d6d6;">RGB/Alpha (8-bit integer/channel)  sRGB built-in</span>
<div class="a " style="left:1404px;top:998px;width:143px;height:30px;border:1px solid #3a3a3a;"></div>
<span class="t" style="left:1408.3px;top:1007.1px;font-size:14px;line-height:14px;letter-spacing:0.182px;color:#d6d6d6;">256 x 256 (39.9 MiB)</span>
<div class="a " style="left:1433px;top:1021px;width:7px;height:1px;background:#d6d6d6;"></div>
<span class="t" style="left:1589.3px;top:1007.1px;font-size:14px;line-height:14px;letter-spacing:-0.536px;color:#d6d6d6;">0.00°</span>
<span class="t" style="left:1744.3px;top:1007.1px;font-size:14px;line-height:14px;letter-spacing:-0.216px;color:#d6d6d6;">200.0%</span>
<div class="a " style="left:1809px;top:1011px;width:80.5px;height:4.6px;background:#393939;border-radius:2px;"></div>
<div class="a " style="left:1809px;top:1011px;width:28px;height:4.6px;background:#5b80a9;border-radius:2px;"></div>
<div class="a " style="left:1835px;top:1006px;width:15px;height:15px;background:#505050;border:1px solid #6a6a6a;border-radius:3px;"></div>
<svg class="a" style="left:0;top:0" width="1920" height="1028" viewBox="0 0 1920 1028"><path d="M167.8,881.1 h2.2 v11.7 h-2.2 z M171.1,887 L179,879 V895 Z M179.9,879 h2.2 v16 h-2.2 z" fill="#dcdcdc"/><path d="M200.1,887 L208.3,879 V895 Z M208.9,879 h2.2 v16 h-2.2 z" fill="#dcdcdc"/><rect x="228.9" y="880.9" width="12.2" height="12.2" fill="#dcdcdc"/><path d="M260.8,879 V895 L269.2,887 Z" fill="#dcdcdc"/><path d="M289.8,879 h2.2 v16 h-2.2 z M292.7,879 V895 L301.1,887 Z" fill="#dcdcdc"/><path d="M317.8,879 h2.2 v16 h-2.2 z M320.6,879 V895 L329,887 Z M329.9,881.1 h2.2 v11.7 h-2.2 z" fill="#dcdcdc"/><path d="M422.2,886.25 h9.6 l-4.8,-5 z" fill="#909090"/><path d="M422.2,891.5 h9.6 l-4.8,5 z" fill="#909090"/><path d="M459,880.7 H475.2 V892.6 H459 Z" fill="none" stroke="#d4d4d4" stroke-width="1.3" /><path d="M460.6,881.7 V891.6 M473.59999999999997,881.7 V891.6" fill="none" stroke="#d4d4d4" stroke-width="1.3" stroke-dasharray="1.3 1.2"/><path d="M465,883.4 v6.4 l4.4,-3.2 z" fill="#d4d4d4"/><path d="M471,880.6 l2.6,-3 M462.6,892.8 l-2.6,3" fill="none" stroke="#d4d4d4" stroke-width="1.3" /><rect x="469.4" y="879" width="3" height="3" fill="#3c3c3c"/><rect x="461.4" y="891.4" width="3" height="3" fill="#3c3c3c"/><path d="M471,880.6 l2.6,-3 M462.6,892.8 l-2.6,3" fill="none" stroke="#d4d4d4" stroke-width="1.3" /><path d="M583.2,886.045 h9.6 l-4.8,-5 z" fill="#909090"/><path d="M583.2,891.19 h9.6 l-4.8,5 z" fill="#909090"/><path d="M619.6,880.7 H636.2 V892.6 H619.6 Z" fill="none" stroke="#d4d4d4" stroke-width="1.8" /><path d="M621.2,881.7 V891.6 M634.6,881.7 V891.6" fill="none" stroke="#d4d4d4" stroke-width="1.3" stroke-dasharray="1.3 1.2"/><path d="M652.8,882.6 V879.7 H667.1 V889.2 H664.4" fill="none" stroke="#d4d4d4" stroke-width="1.4" /><path d="M648.9,883.5 H663.2 V893.3 H648.9 Z" fill="none" stroke="#d4d4d4" stroke-width="1.4" /><path d="M650.5,884.5 V892.3 M661.6,884.5 V892.3" fill="none" stroke="#d4d4d4" stroke-width="1.3" stroke-dasharray="1.3 1.2"/><path d="M679.7,880.7 H696.3 V892.6 H679.7 Z" fill="none" stroke="#d4d4d4" stroke-width="1.4" /><path d="M681.3000000000001,881.7 V891.6 M694.6999999999999,881.7 V891.6" fill="none" stroke="#d4d4d4" stroke-width="1.3" stroke-dasharray="1.3 1.2"/><path d="M681.9,894.7 L694.6,877.8" fill="none" stroke="#d4d4d4" stroke-width="1.8" /><path d="M1736.7,877.4 c-1,4 -10,8 -10,14 c0,4 4.5,6.2 10,6.2 c5.5,0 9.3,-2.2 9.3,-6.2 c0,-6 -8,-9 -9.3,-14 z" fill="#d4d4d4"/><path d="M1735.5,881 c-5,5 -6,10 -2.5,16.5 M1738.8,881.5 c-3.5,5.5 -3,10.5 1,15.5" fill="none" stroke="#484848" stroke-width="1.5"/><rect x="1757.9" y="883.7" width="2.3" height="6.3" fill="#d4d4d4"/><path d="M1760.9,883.7 l6.1,-5.1 v16.6 l-6.1,-5.2 z" fill="#d4d4d4"/><path d="M1770.0,892.9000000000001 h9 l-4.5,4.6 z" fill="#a0a0a0"/><rect x="1787" y="879.2" width="17.8" height="2.5" fill="#d4d4d4"/><rect x="1787" y="885" width="17.8" height="2.8" fill="#d4d4d4"/><rect x="1787" y="891.2" width="17.8" height="2.8" fill="#d4d4d4"/><path d="M1800.7,893.3 h8.2 l-4.1,4.2 z" fill="#a0a0a0"/><path d="M1857.9,884.9 v-5.4 h9.2 v8.6 h-5.4" fill="none" stroke="#d4d4d4" stroke-width="2.04" /><path d="M1851.2,885.8 h9.5 v8.6 h-9.5 z" fill="none" stroke="#d4d4d4" stroke-width="2.04" /><path d="M1886.2,881.4000000000001 l11.6,11.6 M1897.8,881.4000000000001 l-11.6,11.6" fill="none" stroke="#d4d4d4" stroke-width="1.92" /><rect x="258" y="926" width="1" height="51" fill="#3c3f41"/><rect x="278" y="926" width="1" height="51" fill="#3c3f41"/><rect x="298" y="926" width="1" height="51" fill="#3c3f41"/><rect x="318" y="926" width="1" height="51" fill="#3c3f41"/><rect x="338" y="926" width="1" height="51" fill="#3c3f41"/><rect x="358" y="926" width="1" height="51" fill="#3c3f41"/><rect x="378" y="926" width="1" height="51" fill="#3c3f41"/><rect x="398" y="926" width="1" height="51" fill="#3c3f41"/><rect x="418" y="926" width="1" height="51" fill="#3c3f41"/><rect x="438" y="926" width="1" height="51" fill="#3c3f41"/><rect x="458" y="926" width="1" height="51" fill="#3c3f41"/><rect x="478" y="926" width="1" height="51" fill="#3c3f41"/><rect x="498" y="926" width="1" height="51" fill="#3c3f41"/><rect x="518" y="926" width="1" height="51" fill="#3c3f41"/><rect x="538" y="926" width="1" height="51" fill="#3c3f41"/><rect x="558" y="926" width="1" height="51" fill="#3c3f41"/><rect x="578" y="926" width="1" height="51" fill="#3c3f41"/><rect x="598" y="926" width="1" height="51" fill="#3c3f41"/><rect x="618" y="926" width="1" height="51" fill="#3c3f41"/><rect x="638" y="926" width="1" height="51" fill="#3c3f41"/><rect x="658" y="926" width="1" height="51" fill="#3c3f41"/><rect x="678" y="926" width="1" height="51" fill="#3c3f41"/><rect x="698" y="926" width="1" height="51" fill="#3c3f41"/><rect x="718" y="926" width="1" height="51" fill="#3c3f41"/><rect x="738" y="926" width="1" height="51" fill="#3c3f41"/><rect x="758" y="926" width="1" height="51" fill="#3c3f41"/><rect x="778" y="926" width="1" height="51" fill="#3c3f41"/><rect x="798" y="926" width="1" height="51" fill="#3c3f41"/><rect x="818" y="926" width="1" height="51" fill="#3c3f41"/><rect x="838" y="926" width="1" height="51" fill="#3c3f41"/><rect x="858" y="926" width="1" height="51" fill="#3c3f41"/><rect x="878" y="926" width="1" height="51" fill="#3c3f41"/><rect x="898" y="926" width="1" height="51" fill="#3c3f41"/><rect x="918" y="926" width="1" height="51" fill="#3c3f41"/><rect x="938" y="926" width="1" height="51" fill="#3c3f41"/><rect x="958" y="926" width="1" height="51" fill="#3c3f41"/><rect x="978" y="926" width="1" height="51" fill="#3c3f41"/><rect x="998" y="926" width="1" height="51" fill="#3c3f41"/><rect x="1018" y="926" width="1" height="51" fill="#3c3f41"/><rect x="1038" y="926" width="1" height="51" fill="#3c3f41"/><rect x="1058" y="926" width="1" height="51" fill="#3c3f41"/><rect x="1078" y="926" width="1" height="51" fill="#3c3f41"/><rect x="1098" y="926" width="1" height="51" fill="#3c3f41"/><rect x="1118" y="926" width="1" height="51" fill="#3c3f41"/><rect x="1138" y="926" width="1" height="51" fill="#3c3f41"/><rect x="1158" y="926" width="1" height="51" fill="#3c3f41"/><rect x="1178" y="926" width="1" height="51" fill="#3c3f41"/><rect x="1198" y="926" width="1" height="51" fill="#3c3f41"/><rect x="1218" y="926" width="1" height="51" fill="#3c3f41"/><rect x="1238" y="926" width="1" height="51" fill="#3c3f41"/><rect x="1258" y="926" width="1" height="51" fill="#3c3f41"/><rect x="1278" y="926" width="1" height="51" fill="#3c3f41"/><rect x="1298" y="926" width="1" height="51" fill="#3c3f41"/><rect x="1318" y="926" width="1" height="51" fill="#3c3f41"/><rect x="1338" y="926" width="1" height="51" fill="#3c3f41"/><rect x="1358" y="926" width="1" height="51" fill="#3c3f41"/><rect x="1378" y="926" width="1" height="51" fill="#3c3f41"/><rect x="1398" y="926" width="1" height="51" fill="#3c3f41"/><rect x="1418" y="926" width="1" height="51" fill="#3c3f41"/><rect x="1438" y="926" width="1" height="51" fill="#3c3f41"/><rect x="1458" y="926" width="1" height="51" fill="#3c3f41"/><rect x="1478" y="926" width="1" height="51" fill="#3c3f41"/><rect x="1498" y="926" width="1" height="51" fill="#3c3f41"/><rect x="1518" y="926" width="1" height="51" fill="#3c3f41"/><rect x="1538" y="926" width="1" height="51" fill="#3c3f41"/><rect x="1558" y="926" width="1" height="51" fill="#3c3f41"/><rect x="1578" y="926" width="1" height="51" fill="#3c3f41"/><rect x="1598" y="926" width="1" height="51" fill="#3c3f41"/><rect x="1618" y="926" width="1" height="51" fill="#3c3f41"/><rect x="1638" y="926" width="1" height="51" fill="#3c3f41"/><rect x="1658" y="926" width="1" height="51" fill="#3c3f41"/><rect x="1678" y="926" width="1" height="51" fill="#3c3f41"/><rect x="1698" y="926" width="1" height="51" fill="#3c3f41"/><rect x="1718" y="926" width="1" height="51" fill="#3c3f41"/><rect x="1738" y="926" width="1" height="51" fill="#3c3f41"/><rect x="1758" y="926" width="1" height="51" fill="#3c3f41"/><rect x="1778" y="926" width="1" height="51" fill="#3c3f41"/><rect x="1798" y="926" width="1" height="51" fill="#3c3f41"/><rect x="1818" y="926" width="1" height="51" fill="#3c3f41"/><rect x="1838" y="926" width="1" height="51" fill="#3c3f41"/><rect x="1858" y="926" width="1" height="51" fill="#3c3f41"/><rect x="1878" y="926" width="1" height="51" fill="#3c3f41"/><rect x="1898" y="926" width="1" height="51" fill="#3c3f41"/><rect x="238" y="932" width="1665" height="1" fill="#3c3f41"/><rect x="238" y="954" width="1665" height="1" fill="#3c3f41"/><rect x="239" y="955" width="78" height="21" fill="#3d4650"/><rect x="278" y="955" width="1" height="21" fill="#373a3c"/><rect x="298" y="955" width="1" height="21" fill="#373a3c"/><g transform="translate(11,941.6)" ><path d="M0.6,-5.2 L5.2,-0.6 L2.6,0.8 L3,3.6 L0.8,1.6 L-5,5.2 L-1.4,-0.6 L-3.6,-2.8 L-0.6,-2.6 Z" fill="#cfcfcf"/></g><path d="M166,941.6 c3,-6.8 11,-6.8 14,0 c-3,6.8 -11,6.8 -14,0 z" fill="none" stroke="#e6e6e6" stroke-width="1.2"/><path d="M166.6,941.0 c3,-6 9.8,-6 12.8,0 c-1,2 -2.5,3.4 -4,4.2 h-4.8 c-1.5,-0.8 -3,-2.2 -4,-4.2 z" fill="#e6e6e6"/><circle cx="173" cy="941.0" r="3.6" fill="#e6e6e6" stroke="#363636" stroke-width="1.3"/><rect x="186.2" y="940.2" width="11.8" height="8" fill="#7a7a7a"/><path d="M197,940.6 C197,937.0 195.5,935.2 192.6,934.6" fill="none" stroke="#7a7a7a" stroke-width="2" /><rect x="220" y="935.0" width="15" height="14.2" fill="#5a5a5a"/><rect x="220" y="935.0" width="5" height="4.73" fill="#777"/><rect x="230" y="935.0" width="5" height="4.73" fill="#777"/><rect x="225" y="939.73" width="5" height="4.73" fill="#777"/><rect x="220" y="944.46" width="5" height="4.73" fill="#777"/><rect x="230" y="944.46" width="5" height="4.73" fill="#777"/><g transform="translate(11,965.0)" ><path d="M0.6,-5.2 L5.2,-0.6 L2.6,0.8 L3,3.6 L0.8,1.6 L-5,5.2 L-1.4,-0.6 L-3.6,-2.8 L-0.6,-2.6 Z" fill="#cfcfcf"/></g><path d="M166,965.0 c3,-6.8 11,-6.8 14,0 c-3,6.8 -11,6.8 -14,0 z" fill="none" stroke="#e6e6e6" stroke-width="1.2"/><path d="M166.6,964.4 c3,-6 9.8,-6 12.8,0 c-1,2 -2.5,3.4 -4,4.2 h-4.8 c-1.5,-0.8 -3,-2.2 -4,-4.2 z" fill="#e6e6e6"/><circle cx="173" cy="964.4" r="3.6" fill="#e6e6e6" stroke="#363636" stroke-width="1.3"/><rect x="186.2" y="963.6" width="11.8" height="8" fill="#7a7a7a"/><path d="M197,964.0 C197,960.4 195.5,958.6 192.6,958.0" fill="none" stroke="#7a7a7a" stroke-width="2" /><rect x="220" y="958.4" width="15" height="14.2" fill="#5a5a5a"/><rect x="220" y="958.4" width="5" height="4.73" fill="#777"/><rect x="230" y="958.4" width="5" height="4.73" fill="#777"/><rect x="225" y="963.13" width="5" height="4.73" fill="#777"/><rect x="220" y="967.86" width="5" height="4.73" fill="#777"/><rect x="230" y="967.86" width="5" height="4.73" fill="#777"/><path d="M8.4,920 h15.6 M16.2,912.2 v15.6" fill="none" stroke="#d4d4d4" stroke-width="2.4" /><path d="M17.7,923.1999999999999 h8 l-4.0,4.2 z" fill="#a0a0a0"/><path d="M214.7,918 v-5.1 h14.8 v5.1 M214.7,922.4 v5 h14.8 v-5" fill="none" stroke="#d4d4d4" stroke-width="1.3" /><path d="M218,920.1 h8" fill="none" stroke="#d4d4d4" stroke-width="2.2" /><path d="M215.6,920.1 l4.8,-4 v8 z M228.6,920.1 l-4.8,-4 v8 z" fill="#ececec"/><rect x="237" y="925" width="19" height="7.4" fill="#e8a43a"/><rect x="237" y="932" width="2" height="44" fill="#e8a43a"/><rect x="254" y="932" width="2" height="44" fill="#e8a43a"/><circle cx="246.4" cy="964.8" r="2.5" fill="#e8a43a"/><path d="M1907,916 h9 l-4.5,-5 z M1907,966 h9 l-4.5,5 z" fill="#a8a8a8"/><path d="M11.5,981.5 v9 l-5,-4.5 z M1892.5,981.5 v9 l5,-4.5 z" fill="#a8a8a8"/><rect x="7.5" y="1004.6" width="14.2" height="14.2" fill="#3d3d3d" stroke="#d8d8d8" stroke-width="1.2"/><path d="M14.6,1007.6 a4.1,4.1 0 1 0 0.01,0 z" fill="none" stroke="#d4d4d4" stroke-width="1.3" stroke-dasharray="1.2 1.66"/><circle cx="1567.3" cy="1013.2" r="12.2" fill="#323232"/><path d="M1567.3,1013.2 h13.2" fill="none" stroke="#e8e8e8" stroke-width="1.1" /><circle cx="1567.3" cy="1013.2" r="1.4" fill="#fff"/><circle cx="1580.6" cy="1013.2" r="1.3" fill="#e8e8e8"/><path d="M1567.3,1003 v7 M1567.3,1016.5 v7 M1557,1013.2 h7" fill="none" stroke="#4a4a4a" stroke-width="0.8" stroke-dasharray="1 1.2"/><path d="M1896,1007.5 h18 v10.5 h-18 z M1905,1018 v3.5 M1899,1021.5 h12" fill="none" stroke="#d4d4d4" stroke-width="1.4" /><circle cx="1905" cy="1013" r="1" fill="#d4d4d4"/></svg>
</body></html>
